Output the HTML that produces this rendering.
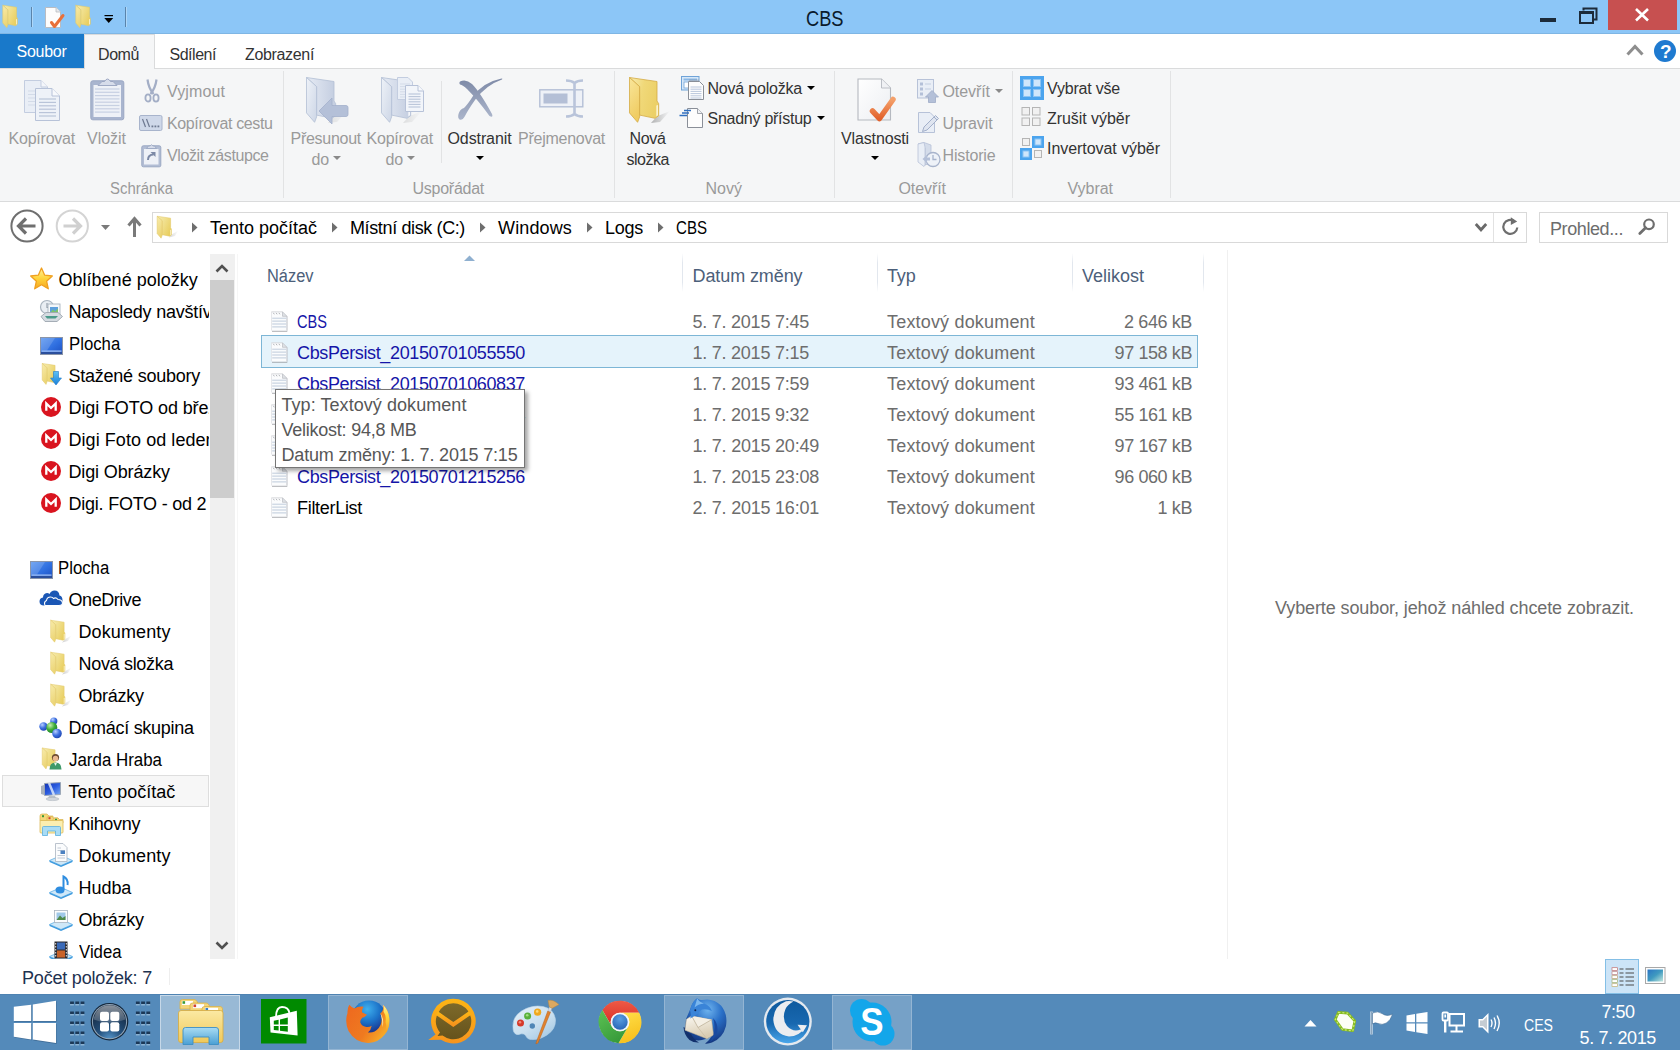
<!DOCTYPE html>
<html lang="cs"><head><meta charset="utf-8"><title>CBS</title>
<style>
html,body{margin:0;padding:0;width:1680px;height:1050px;overflow:hidden;background:#fff;font-family:"Liberation Sans",sans-serif;font-size:18px;color:#000}
.a{position:absolute}
.t{position:absolute;white-space:nowrap}
svg{overflow:visible}
</style></head><body>
<div class="a" style="left:0px;top:0px;width:1680px;height:34px;background:#8cc6f7;"></div>
<div class="a" style="left:0px;top:33px;width:1680px;height:1px;background:#7fb6e4;"></div>
<div class="t" style="left:806.0px;top:6px;font-size:22px;line-height:25px;color:#0a1a2c;transform:scaleX(0.83);transform-origin:0 0;">CBS</div>
<div class="a" style="left:1608px;top:0px;width:69px;height:30px;background:#c75050;"></div>
<div class="a" style="left:1540px;top:18px;width:16px;height:4px;background:#1c2b3a;"></div>
<svg class="a" style="left:1576px;top:5px;" width="24" height="20" viewBox="0 0 24 20"><path d="M7.5 5.5V3.5H20.5V14.5H18" fill="none" stroke="#1c2b3a" stroke-width="2"/><rect x="4" y="7" width="13" height="11" fill="none" stroke="#1c2b3a" stroke-width="2"/><rect x="3" y="6" width="15" height="3" fill="#1c2b3a"/></svg>
<svg class="a" style="left:1634px;top:7px;" width="16" height="16" viewBox="0 0 16 16"><path d="M2 2L14 13.5M14 2L2 13.5" stroke="#fff" stroke-width="2.6" fill="none"/></svg>
<div class="a" style="left:0px;top:34px;width:1680px;height:34px;background:#fff;"></div>
<div class="a" style="left:0px;top:68px;width:1680px;height:1px;background:#dadbdc;"></div>
<div class="a" style="left:0px;top:34px;width:84px;height:34px;background:#1979ca;"></div>
<div class="t" style="left:16.5px;top:43px;font-size:16px;line-height:17px;color:#fff;letter-spacing:-0.266px;">Soubor</div>
<div class="a" style="left:84px;top:34px;width:71px;height:35px;background:#f5f6f7;border:1px solid #dadbdc;border-bottom:none;box-sizing:border-box;"></div>
<div class="t" style="left:98.0px;top:46px;font-size:16px;line-height:17px;color:#333333;letter-spacing:-0.420px;">Domů</div>
<div class="t" style="left:169.5px;top:46px;font-size:16px;line-height:17px;color:#333333;letter-spacing:-0.473px;">Sdílení</div>
<div class="t" style="left:245.0px;top:46px;font-size:16px;line-height:17px;color:#333333;letter-spacing:-0.338px;">Zobrazení</div>
<svg class="a" style="left:1626px;top:43px;" width="18" height="14" viewBox="0 0 18 14"><path d="M1.5 11.5L9 3.5L16.5 11.5" fill="none" stroke="#8e8e8e" stroke-width="3"/></svg>
<div class="a" style="left:1654px;top:40px;width:22px;height:22px;background:#1e7ad0;border-radius:50%;"></div>
<div class="t" style="left:1660.0px;top:41px;font-size:19px;line-height:21px;color:#fff;font-weight:bold;">?</div>
<div class="a" style="left:0px;top:69px;width:1680px;height:132px;background:#f5f6f7;"></div>
<div class="a" style="left:0px;top:201px;width:1680px;height:1px;background:#dadbdc;"></div>
<div class="a" style="left:283px;top:71px;width:1px;height:127px;background:#e2e3e4;"></div>
<div class="a" style="left:614px;top:71px;width:1px;height:127px;background:#e2e3e4;"></div>
<div class="a" style="left:834px;top:71px;width:1px;height:127px;background:#e2e3e4;"></div>
<div class="a" style="left:1012px;top:71px;width:1px;height:127px;background:#e2e3e4;"></div>
<div class="a" style="left:1170px;top:71px;width:1px;height:127px;background:#e2e3e4;"></div>
<div class="a" style="left:441px;top:81px;width:1px;height:82px;background:#e2e3e4;"></div>
<div class="t" style="left:8.5px;top:130px;font-size:16px;line-height:17px;color:#9a9a9a;letter-spacing:-0.220px;">Kopírovat</div>
<div class="t" style="left:87.0px;top:130px;font-size:16px;line-height:17px;color:#9a9a9a;letter-spacing:-0.021px;">Vložit</div>
<div class="t" style="left:167.0px;top:83px;font-size:16px;line-height:17px;color:#9a9a9a;letter-spacing:0.114px;">Vyjmout</div>
<div class="t" style="left:167.0px;top:115px;font-size:16px;line-height:17px;color:#9a9a9a;letter-spacing:-0.378px;">Kopírovat cestu</div>
<div class="t" style="left:167.0px;top:147px;font-size:16px;line-height:17px;color:#9a9a9a;letter-spacing:-0.407px;">Vložit zástupce</div>
<div class="t" style="left:109.5px;top:180px;font-size:16px;line-height:17px;color:#9a9a9a;transform:scaleX(0.9320);transform-origin:0 0;">Schránka</div>
<div class="t" style="left:290.5px;top:130px;font-size:16px;line-height:17px;color:#9a9a9a;letter-spacing:-0.271px;">Přesunout</div>
<div class="t" style="left:311.5px;top:151px;font-size:16px;line-height:17px;color:#9a9a9a;letter-spacing:-0.148px;">do</div>
<svg class="a" style="left:333px;top:156px;" width="8" height="4" viewBox="0 0 8 4"><path d="M0 0H8L4 4Z" fill="#8a8a8a"/></svg>
<div class="t" style="left:366.5px;top:130px;font-size:16px;line-height:17px;color:#9a9a9a;letter-spacing:-0.220px;">Kopírovat</div>
<div class="t" style="left:385.5px;top:151px;font-size:16px;line-height:17px;color:#9a9a9a;letter-spacing:-0.148px;">do</div>
<svg class="a" style="left:407px;top:156px;" width="8" height="4" viewBox="0 0 8 4"><path d="M0 0H8L4 4Z" fill="#8a8a8a"/></svg>
<div class="t" style="left:447.5px;top:130px;font-size:16px;line-height:17px;color:#333333;letter-spacing:-0.102px;">Odstranit</div>
<svg class="a" style="left:475.5px;top:156px;" width="8" height="4" viewBox="0 0 8 4"><path d="M0 0H8L4 4Z" fill="#000"/></svg>
<div class="t" style="left:518.0px;top:130px;font-size:16px;line-height:17px;color:#9a9a9a;letter-spacing:-0.256px;">Přejmenovat</div>
<div class="t" style="left:412.5px;top:180px;font-size:16px;line-height:17px;color:#9a9a9a;letter-spacing:-0.258px;">Uspořádat</div>
<div class="t" style="left:629.5px;top:130px;font-size:16px;line-height:17px;color:#333333;letter-spacing:-0.338px;">Nová</div>
<div class="t" style="left:626.5px;top:151px;font-size:16px;line-height:17px;color:#333333;letter-spacing:-0.475px;">složka</div>
<div class="t" style="left:707.5px;top:80px;font-size:16px;line-height:17px;color:#333333;letter-spacing:-0.204px;">Nová položka</div>
<svg class="a" style="left:806.5px;top:86px;" width="8" height="4" viewBox="0 0 8 4"><path d="M0 0H8L4 4Z" fill="#000"/></svg>
<div class="t" style="left:707.5px;top:110px;font-size:16px;line-height:17px;color:#333333;letter-spacing:-0.259px;">Snadný přístup</div>
<svg class="a" style="left:816.5px;top:116px;" width="8" height="4" viewBox="0 0 8 4"><path d="M0 0H8L4 4Z" fill="#000"/></svg>
<div class="t" style="left:705.5px;top:180px;font-size:16px;line-height:17px;color:#9a9a9a;letter-spacing:0.012px;">Nový</div>
<div class="t" style="left:841.0px;top:130px;font-size:16px;line-height:17px;color:#333333;letter-spacing:-0.137px;">Vlastnosti</div>
<svg class="a" style="left:870.5px;top:156px;" width="8" height="4" viewBox="0 0 8 4"><path d="M0 0H8L4 4Z" fill="#000"/></svg>
<div class="t" style="left:942.5px;top:83px;font-size:16px;line-height:17px;color:#9a9a9a;letter-spacing:-0.073px;">Otevřít</div>
<svg class="a" style="left:994.5px;top:89px;" width="8" height="4" viewBox="0 0 8 4"><path d="M0 0H8L4 4Z" fill="#8a8a8a"/></svg>
<div class="t" style="left:942.5px;top:115px;font-size:16px;line-height:17px;color:#9a9a9a;letter-spacing:-0.097px;">Upravit</div>
<div class="t" style="left:942.5px;top:147px;font-size:16px;line-height:17px;color:#9a9a9a;letter-spacing:-0.154px;">Historie</div>
<div class="t" style="left:898.5px;top:180px;font-size:16px;line-height:17px;color:#9a9a9a;letter-spacing:-0.073px;">Otevřít</div>
<div class="t" style="left:1047.0px;top:80px;font-size:16px;line-height:17px;color:#333333;letter-spacing:-0.199px;">Vybrat vše</div>
<div class="t" style="left:1047.0px;top:110px;font-size:16px;line-height:17px;color:#333333;letter-spacing:-0.048px;">Zrušit výběr</div>
<div class="t" style="left:1047.0px;top:140px;font-size:16px;line-height:17px;color:#333333;letter-spacing:-0.052px;">Invertovat výběr</div>
<div class="t" style="left:1067.5px;top:180px;font-size:16px;line-height:17px;color:#9a9a9a;letter-spacing:-0.025px;">Vybrat</div>
<div class="a" style="left:0px;top:202px;width:1680px;height:48px;background:#fff;"></div>
<div class="a" style="left:152px;top:212px;width:1375px;height:31px;background:#fff;border:1px solid #d9d9d9;box-sizing:border-box;"></div>
<div class="a" style="left:1493px;top:213px;width:1px;height:29px;background:#e2e2e2;"></div>
<div class="a" style="left:1539px;top:212px;width:129px;height:31px;background:#fff;border:1px solid #d9d9d9;box-sizing:border-box;"></div>
<div class="t" style="left:210.0px;top:218px;font-size:18px;line-height:20px;color:#000;letter-spacing:-0.006px;">Tento počítač</div>
<div class="t" style="left:350.0px;top:218px;font-size:18px;line-height:20px;color:#000;letter-spacing:-0.376px;">Místní disk (C:)</div>
<div class="t" style="left:498.0px;top:218px;font-size:18px;line-height:20px;color:#000;letter-spacing:0.140px;">Windows</div>
<div class="t" style="left:605.0px;top:218px;font-size:18px;line-height:20px;color:#000;letter-spacing:-0.258px;">Logs</div>
<div class="t" style="left:676.0px;top:218px;font-size:18px;line-height:20px;color:#000;transform:scaleX(0.8376);transform-origin:0 0;">CBS</div>
<svg class="a" style="left:191px;top:222px;" width="7" height="11" viewBox="0 0 7 11"><path d="M1 0.500L6.500 5.500L1 10.500Z" fill="#6e6e6e"/></svg>
<svg class="a" style="left:331px;top:222px;" width="7" height="11" viewBox="0 0 7 11"><path d="M1 0.500L6.500 5.500L1 10.500Z" fill="#6e6e6e"/></svg>
<svg class="a" style="left:479px;top:222px;" width="7" height="11" viewBox="0 0 7 11"><path d="M1 0.500L6.500 5.500L1 10.500Z" fill="#6e6e6e"/></svg>
<svg class="a" style="left:586px;top:222px;" width="7" height="11" viewBox="0 0 7 11"><path d="M1 0.500L6.500 5.500L1 10.500Z" fill="#6e6e6e"/></svg>
<svg class="a" style="left:657px;top:222px;" width="7" height="11" viewBox="0 0 7 11"><path d="M1 0.500L6.500 5.500L1 10.500Z" fill="#6e6e6e"/></svg>
<div class="t" style="left:1550.0px;top:219px;font-size:18px;line-height:20px;color:#6d6d6d;letter-spacing:-0.405px;">Prohled...</div>
<div class="a" style="left:210px;top:254px;width:25px;height:705px;background:#f0f0f0;"></div>
<div class="a" style="left:237px;top:254px;width:1px;height:705px;background:#f6f6f6;"></div>
<div class="a" style="left:210px;top:280px;width:24px;height:218px;background:#cdcdcd;"></div>
<svg class="a" style="left:215px;top:264px;" width="14" height="9" viewBox="0 0 14 9"><path d="M1.5 7.5L7 2L12.5 7.5" fill="none" stroke="#505050" stroke-width="2.6"/></svg>
<svg class="a" style="left:215px;top:941px;" width="14" height="9" viewBox="0 0 14 9"><path d="M1.5 1.5L7 7L12.5 1.5" fill="none" stroke="#505050" stroke-width="2.6"/></svg>
<div class="a" style="left:2px;top:775px;width:207px;height:32px;background:#f7f7f7;border:1px solid #dedede;box-sizing:border-box;"></div>
<div class="a" style="left:0;top:250px;width:209px;height:709px;overflow:hidden">
<div class="t" style="left:58.5px;top:20px;font-size:18px;line-height:20px;color:#000;letter-spacing:0.013px;">Oblíbené položky</div>
<div class="t" style="left:68.5px;top:52px;font-size:18px;line-height:20px;color:#000;letter-spacing:-0.241px;">Naposledy navštívené</div>
<div class="t" style="left:68.5px;top:84px;font-size:18px;line-height:20px;color:#000;transform:scaleX(0.9303);transform-origin:0 0;">Plocha</div>
<div class="t" style="left:68.5px;top:116px;font-size:18px;line-height:20px;color:#000;letter-spacing:-0.239px;">Stažené soubory</div>
<div class="t" style="left:68.5px;top:148px;font-size:18px;line-height:20px;color:#000;letter-spacing:-0.118px;">Digi FOTO od března</div>
<div class="t" style="left:68.5px;top:180px;font-size:18px;line-height:20px;color:#000;letter-spacing:0.061px;">Digi Foto od leden</div>
<div class="t" style="left:68.5px;top:212px;font-size:18px;line-height:20px;color:#000;letter-spacing:-0.135px;">Digi Obrázky</div>
<div class="t" style="left:68.5px;top:244px;font-size:18px;line-height:20px;color:#000;letter-spacing:-0.230px;">Digi. FOTO - od 2</div>
<div class="t" style="left:58.0px;top:308px;font-size:18px;line-height:20px;color:#000;transform:scaleX(0.9303);transform-origin:0 0;">Plocha</div>
<div class="t" style="left:68.5px;top:340px;font-size:18px;line-height:20px;color:#000;letter-spacing:-0.441px;">OneDrive</div>
<div class="t" style="left:78.5px;top:372px;font-size:18px;line-height:20px;color:#000;letter-spacing:0.107px;">Dokumenty</div>
<div class="t" style="left:78.5px;top:404px;font-size:18px;line-height:20px;color:#000;letter-spacing:-0.313px;">Nová složka</div>
<div class="t" style="left:78.5px;top:436px;font-size:18px;line-height:20px;color:#000;letter-spacing:-0.245px;">Obrázky</div>
<div class="t" style="left:68.5px;top:468px;font-size:18px;line-height:20px;color:#000;letter-spacing:-0.269px;">Domácí skupina</div>
<div class="t" style="left:68.5px;top:500px;font-size:18px;line-height:20px;color:#000;transform:scaleX(0.9389);transform-origin:0 0;">Jarda Hraba</div>
<div class="t" style="left:68.5px;top:532px;font-size:18px;line-height:20px;color:#000;letter-spacing:-0.029px;">Tento počítač</div>
<div class="t" style="left:68.5px;top:564px;font-size:18px;line-height:20px;color:#000;letter-spacing:-0.294px;">Knihovny</div>
<div class="t" style="left:78.5px;top:596px;font-size:18px;line-height:20px;color:#000;letter-spacing:0.107px;">Dokumenty</div>
<div class="t" style="left:78.5px;top:628px;font-size:18px;line-height:20px;color:#000;letter-spacing:-0.048px;">Hudba</div>
<div class="t" style="left:78.5px;top:660px;font-size:18px;line-height:20px;color:#000;letter-spacing:-0.245px;">Obrázky</div>
<div class="t" style="left:78.5px;top:692px;font-size:18px;line-height:20px;color:#000;transform:scaleX(0.9319);transform-origin:0 0;">Videa</div>
</div>
<div class="t" style="left:267.0px;top:266px;font-size:18px;line-height:20px;color:#4c607a;transform:scaleX(0.9114);transform-origin:0 0;">Název</div>
<div class="t" style="left:692.5px;top:266px;font-size:18px;line-height:20px;color:#4c607a;letter-spacing:-0.094px;">Datum změny</div>
<div class="t" style="left:887.0px;top:266px;font-size:18px;line-height:20px;color:#4c607a;letter-spacing:-0.171px;">Typ</div>
<div class="t" style="left:1082.0px;top:266px;font-size:18px;line-height:20px;color:#4c607a;letter-spacing:-0.004px;">Velikost</div>
<div class="a" style="left:682px;top:253px;width:1px;height:39px;background:linear-gradient(to bottom,rgba(226,231,238,0),#e2e7ee 25%,#e2e7ee 75%,rgba(226,231,238,0));"></div>
<div class="a" style="left:877px;top:253px;width:1px;height:39px;background:linear-gradient(to bottom,rgba(226,231,238,0),#e2e7ee 25%,#e2e7ee 75%,rgba(226,231,238,0));"></div>
<div class="a" style="left:1072px;top:253px;width:1px;height:39px;background:linear-gradient(to bottom,rgba(226,231,238,0),#e2e7ee 25%,#e2e7ee 75%,rgba(226,231,238,0));"></div>
<div class="a" style="left:1203px;top:253px;width:1px;height:39px;background:linear-gradient(to bottom,rgba(226,231,238,0),#e2e7ee 25%,#e2e7ee 75%,rgba(226,231,238,0));"></div>
<svg class="a" style="left:464px;top:255px;" width="11" height="6" viewBox="0 0 11 6"><path d="M0 6L5.5 0.5L11 6Z" fill="#8fb0d0"/></svg>
<div class="a" style="left:1227px;top:250px;width:1px;height:709px;background:#f0f0f0;"></div>
<div class="a" style="left:261px;top:335px;width:937px;height:33px;background:#e5f3fb;border:1px solid #7db6d6;box-sizing:border-box;"></div>
<div class="t" style="left:297.0px;top:312px;font-size:18px;line-height:20px;color:#1515a8;transform:scaleX(0.8106);transform-origin:0 0;">CBS</div>
<div class="t" style="left:692.5px;top:312px;font-size:18px;line-height:20px;color:#6d6d6d;letter-spacing:-0.241px;">5. 7. 2015 7:45</div>
<div class="t" style="left:887.0px;top:312px;font-size:18px;line-height:20px;color:#6d6d6d;letter-spacing:0.183px;">Textový dokument</div>
<div class="t" style="left:1124.1px;top:312px;font-size:18px;line-height:20px;color:#6d6d6d;letter-spacing:-0.400px;">2 646 kB</div>
<div class="t" style="left:297.0px;top:343px;font-size:18px;line-height:20px;color:#1515a8;letter-spacing:-0.367px;">CbsPersist_20150701055550</div>
<div class="t" style="left:692.5px;top:343px;font-size:18px;line-height:20px;color:#6d6d6d;letter-spacing:-0.241px;">1. 7. 2015 7:15</div>
<div class="t" style="left:887.0px;top:343px;font-size:18px;line-height:20px;color:#6d6d6d;letter-spacing:0.183px;">Textový dokument</div>
<div class="t" style="left:1114.6px;top:343px;font-size:18px;line-height:20px;color:#6d6d6d;letter-spacing:-0.405px;">97 158 kB</div>
<div class="t" style="left:297.0px;top:374px;font-size:18px;line-height:20px;color:#1515a8;letter-spacing:-0.367px;">CbsPersist_20150701060837</div>
<div class="t" style="left:692.5px;top:374px;font-size:18px;line-height:20px;color:#6d6d6d;letter-spacing:-0.241px;">1. 7. 2015 7:59</div>
<div class="t" style="left:887.0px;top:374px;font-size:18px;line-height:20px;color:#6d6d6d;letter-spacing:0.183px;">Textový dokument</div>
<div class="t" style="left:1114.6px;top:374px;font-size:18px;line-height:20px;color:#6d6d6d;letter-spacing:-0.405px;">93 461 kB</div>
<div class="t" style="left:297.0px;top:405px;font-size:18px;line-height:20px;color:#1515a8;letter-spacing:-0.367px;">CbsPersist_20150701073204</div>
<div class="t" style="left:692.5px;top:405px;font-size:18px;line-height:20px;color:#6d6d6d;letter-spacing:-0.241px;">1. 7. 2015 9:32</div>
<div class="t" style="left:887.0px;top:405px;font-size:18px;line-height:20px;color:#6d6d6d;letter-spacing:0.183px;">Textový dokument</div>
<div class="t" style="left:1114.6px;top:405px;font-size:18px;line-height:20px;color:#6d6d6d;letter-spacing:-0.405px;">55 161 kB</div>
<div class="t" style="left:297.0px;top:436px;font-size:18px;line-height:20px;color:#1515a8;letter-spacing:-0.314px;">CbsPersist_20150701184942</div>
<div class="t" style="left:692.5px;top:436px;font-size:18px;line-height:20px;color:#6d6d6d;letter-spacing:-0.226px;">1. 7. 2015 20:49</div>
<div class="t" style="left:887.0px;top:436px;font-size:18px;line-height:20px;color:#6d6d6d;letter-spacing:0.183px;">Textový dokument</div>
<div class="t" style="left:1114.6px;top:436px;font-size:18px;line-height:20px;color:#6d6d6d;letter-spacing:-0.405px;">97 167 kB</div>
<div class="t" style="left:297.0px;top:467px;font-size:18px;line-height:20px;color:#1515a8;letter-spacing:-0.367px;">CbsPersist_20150701215256</div>
<div class="t" style="left:692.5px;top:467px;font-size:18px;line-height:20px;color:#6d6d6d;letter-spacing:-0.226px;">1. 7. 2015 23:08</div>
<div class="t" style="left:887.0px;top:467px;font-size:18px;line-height:20px;color:#6d6d6d;letter-spacing:0.183px;">Textový dokument</div>
<div class="t" style="left:1114.6px;top:467px;font-size:18px;line-height:20px;color:#6d6d6d;letter-spacing:-0.405px;">96 060 kB</div>
<div class="t" style="left:297.0px;top:498px;font-size:18px;line-height:20px;color:#000;letter-spacing:-0.301px;">FilterList</div>
<div class="t" style="left:692.5px;top:498px;font-size:18px;line-height:20px;color:#6d6d6d;letter-spacing:-0.226px;">2. 7. 2015 16:01</div>
<div class="t" style="left:887.0px;top:498px;font-size:18px;line-height:20px;color:#6d6d6d;letter-spacing:0.183px;">Textový dokument</div>
<div class="t" style="left:1157.6px;top:498px;font-size:18px;line-height:20px;color:#6d6d6d;letter-spacing:-0.405px;">1 kB</div>
<div class="t" style="left:1275.0px;top:598px;font-size:18px;line-height:20px;color:#6d6d6d;letter-spacing:-0.101px;">Vyberte soubor, jehož náhled chcete zobrazit.</div>
<div class="t" style="left:22.0px;top:968px;font-size:18px;line-height:20px;color:#1e3250;letter-spacing:-0.193px;">Počet položek: 7</div>
<div class="a" style="left:169px;top:968px;width:1px;height:17px;background:#eeeeee;"></div>
<div class="a" style="left:1605px;top:959px;width:34px;height:35px;background:#cce4f7;border:1px solid #84bfe6;box-sizing:border-box;"></div>
<div class="a" style="left:0px;top:994px;width:1680px;height:56px;background:#548aba;"></div>
<div class="a" style="left:0px;top:994px;width:1680px;height:1px;background:#4f83b2;"></div>
<div class="a" style="left:160px;top:995px;width:80px;height:55px;background:rgba(255,255,255,0.40);box-shadow:inset 0 0 0 1px rgba(255,255,255,0.45);"></div>
<div class="a" style="left:328px;top:995px;width:80px;height:55px;background:rgba(255,255,255,0.20);box-shadow:inset 0 0 0 1px rgba(255,255,255,0.22);"></div>
<div class="a" style="left:664px;top:995px;width:80px;height:55px;background:rgba(255,255,255,0.20);box-shadow:inset 0 0 0 1px rgba(255,255,255,0.22);"></div>
<div class="a" style="left:832px;top:995px;width:80px;height:55px;background:rgba(255,255,255,0.20);box-shadow:inset 0 0 0 1px rgba(255,255,255,0.22);"></div>
<div class="t" style="left:1601.5px;top:1002px;font-size:18px;line-height:20px;color:#fff;letter-spacing:-0.509px;">7:50</div>
<div class="t" style="left:1579.5px;top:1028px;font-size:18px;line-height:20px;color:#fff;letter-spacing:-0.357px;">5. 7. 2015</div>
<div class="t" style="left:1523.5px;top:1017px;font-size:16px;line-height:17px;color:#fff;transform:scaleX(0.8815);transform-origin:0 0;">CES</div>
<svg class="a" style="left:0px;top:993px;" width="60" height="57" viewBox="0 0 60 57"><g fill="#1d3a5a" opacity="0.350" transform="translate(0.600 0.800)">
<path d="M13.800 13.800L31.200 11.700V27.900H13.800Z"/><path d="M32.800 11.400L56 7.700V27.900H32.800Z"/><path d="M13.800 30.100H31.200V46.400L13.800 43.700Z"/><path d="M32.800 30.100H56V50.100L32.800 46.600Z"/></g>
<g fill="#fff"><path d="M13.800 13.800L31.200 11.700V27.900H13.800Z"/><path d="M32.800 11.400L56 7.700V27.900H32.800Z"/>
<path d="M13.800 30.100H31.200V46.400L13.800 43.700Z"/><path d="M32.800 30.100H56V50.100L32.800 46.600Z"/></g></svg>
<svg class="a" style="left:0px;top:993px;" width="160" height="57" viewBox="0 0 160 57"><rect x="70.10000000000001" y="8.5" width="3.800" height="2.600" fill="#1b3857"/><rect x="70.10000000000001" y="11.1" width="3.800" height="1.300" fill="#a9c8e2" opacity="0.750"/><rect x="75.35000000000001" y="8.5" width="3.800" height="2.600" fill="#1b3857"/><rect x="75.35000000000001" y="11.1" width="3.800" height="1.300" fill="#a9c8e2" opacity="0.750"/><rect x="80.60000000000001" y="8.5" width="3.800" height="2.600" fill="#1b3857"/><rect x="80.60000000000001" y="11.1" width="3.800" height="1.300" fill="#a9c8e2" opacity="0.750"/><rect x="70.10000000000001" y="18.5" width="3.800" height="2.600" fill="#1b3857"/><rect x="70.10000000000001" y="21.1" width="3.800" height="1.300" fill="#a9c8e2" opacity="0.750"/><rect x="75.35000000000001" y="18.5" width="3.800" height="2.600" fill="#1b3857"/><rect x="75.35000000000001" y="21.1" width="3.800" height="1.300" fill="#a9c8e2" opacity="0.750"/><rect x="80.60000000000001" y="18.5" width="3.800" height="2.600" fill="#1b3857"/><rect x="80.60000000000001" y="21.1" width="3.800" height="1.300" fill="#a9c8e2" opacity="0.750"/><rect x="70.10000000000001" y="28.5" width="3.800" height="2.600" fill="#1b3857"/><rect x="70.10000000000001" y="31.1" width="3.800" height="1.300" fill="#a9c8e2" opacity="0.750"/><rect x="75.35000000000001" y="28.5" width="3.800" height="2.600" fill="#1b3857"/><rect x="75.35000000000001" y="31.1" width="3.800" height="1.300" fill="#a9c8e2" opacity="0.750"/><rect x="80.60000000000001" y="28.5" width="3.800" height="2.600" fill="#1b3857"/><rect x="80.60000000000001" y="31.1" width="3.800" height="1.300" fill="#a9c8e2" opacity="0.750"/><rect x="70.10000000000001" y="38.5" width="3.800" height="2.600" fill="#1b3857"/><rect x="70.10000000000001" y="41.1" width="3.800" height="1.300" fill="#a9c8e2" opacity="0.750"/><rect x="75.35000000000001" y="38.5" width="3.800" height="2.600" fill="#1b3857"/><rect x="75.35000000000001" y="41.1" width="3.800" height="1.300" fill="#a9c8e2" opacity="0.750"/><rect x="80.60000000000001" y="38.5" width="3.800" height="2.600" fill="#1b3857"/><rect x="80.60000000000001" y="41.1" width="3.800" height="1.300" fill="#a9c8e2" opacity="0.750"/><rect x="70.10000000000001" y="48.5" width="3.800" height="2.600" fill="#1b3857"/><rect x="70.10000000000001" y="51.1" width="3.800" height="1.300" fill="#a9c8e2" opacity="0.750"/><rect x="75.35000000000001" y="48.5" width="3.800" height="2.600" fill="#1b3857"/><rect x="75.35000000000001" y="51.1" width="3.800" height="1.300" fill="#a9c8e2" opacity="0.750"/><rect x="80.60000000000001" y="48.5" width="3.800" height="2.600" fill="#1b3857"/><rect x="80.60000000000001" y="51.1" width="3.800" height="1.300" fill="#a9c8e2" opacity="0.750"/><rect x="135.89999999999998" y="8.5" width="3.800" height="2.600" fill="#1b3857"/><rect x="135.89999999999998" y="11.1" width="3.800" height="1.300" fill="#a9c8e2" opacity="0.750"/><rect x="141.14999999999998" y="8.5" width="3.800" height="2.600" fill="#1b3857"/><rect x="141.14999999999998" y="11.1" width="3.800" height="1.300" fill="#a9c8e2" opacity="0.750"/><rect x="146.39999999999998" y="8.5" width="3.800" height="2.600" fill="#1b3857"/><rect x="146.39999999999998" y="11.1" width="3.800" height="1.300" fill="#a9c8e2" opacity="0.750"/><rect x="135.89999999999998" y="18.5" width="3.800" height="2.600" fill="#1b3857"/><rect x="135.89999999999998" y="21.1" width="3.800" height="1.300" fill="#a9c8e2" opacity="0.750"/><rect x="141.14999999999998" y="18.5" width="3.800" height="2.600" fill="#1b3857"/><rect x="141.14999999999998" y="21.1" width="3.800" height="1.300" fill="#a9c8e2" opacity="0.750"/><rect x="146.39999999999998" y="18.5" width="3.800" height="2.600" fill="#1b3857"/><rect x="146.39999999999998" y="21.1" width="3.800" height="1.300" fill="#a9c8e2" opacity="0.750"/><rect x="135.89999999999998" y="28.5" width="3.800" height="2.600" fill="#1b3857"/><rect x="135.89999999999998" y="31.1" width="3.800" height="1.300" fill="#a9c8e2" opacity="0.750"/><rect x="141.14999999999998" y="28.5" width="3.800" height="2.600" fill="#1b3857"/><rect x="141.14999999999998" y="31.1" width="3.800" height="1.300" fill="#a9c8e2" opacity="0.750"/><rect x="146.39999999999998" y="28.5" width="3.800" height="2.600" fill="#1b3857"/><rect x="146.39999999999998" y="31.1" width="3.800" height="1.300" fill="#a9c8e2" opacity="0.750"/><rect x="135.89999999999998" y="38.5" width="3.800" height="2.600" fill="#1b3857"/><rect x="135.89999999999998" y="41.1" width="3.800" height="1.300" fill="#a9c8e2" opacity="0.750"/><rect x="141.14999999999998" y="38.5" width="3.800" height="2.600" fill="#1b3857"/><rect x="141.14999999999998" y="41.1" width="3.800" height="1.300" fill="#a9c8e2" opacity="0.750"/><rect x="146.39999999999998" y="38.5" width="3.800" height="2.600" fill="#1b3857"/><rect x="146.39999999999998" y="41.1" width="3.800" height="1.300" fill="#a9c8e2" opacity="0.750"/><rect x="135.89999999999998" y="48.5" width="3.800" height="2.600" fill="#1b3857"/><rect x="135.89999999999998" y="51.1" width="3.800" height="1.300" fill="#a9c8e2" opacity="0.750"/><rect x="141.14999999999998" y="48.5" width="3.800" height="2.600" fill="#1b3857"/><rect x="141.14999999999998" y="51.1" width="3.800" height="1.300" fill="#a9c8e2" opacity="0.750"/><rect x="146.39999999999998" y="48.5" width="3.800" height="2.600" fill="#1b3857"/><rect x="146.39999999999998" y="51.1" width="3.800" height="1.300" fill="#a9c8e2" opacity="0.750"/></svg>
<svg class="a" style="left:90px;top:1002px;" width="40" height="40" viewBox="0 0 40 40"><defs><radialGradient id="orb" cx="0.500" cy="1.050" r="0.950"><stop offset="0" stop-color="#5a9bd0"/><stop offset="0.400" stop-color="#24507c"/><stop offset="1" stop-color="#16283e"/></radialGradient>
<linearGradient id="orbh" x1="0" y1="0" x2="0" y2="1"><stop offset="0" stop-color="#fff" stop-opacity="0.500"/><stop offset="1" stop-color="#fff" stop-opacity="0.150"/></linearGradient></defs>
<circle cx="19.500" cy="19.700" r="18.800" fill="#13263a"/><circle cx="19.500" cy="19.700" r="17.600" fill="#8fa3b6"/><circle cx="19.500" cy="19.700" r="16.600" fill="url(#orb)"/>
<path d="M3.600 17.500A16 16 0 0 1 35.400 17.500Q19.500 24 3.600 17.500Z" fill="url(#orbh)"/>
<g fill="#fff"><rect x="10" y="9.700" width="9" height="9.300" rx="2"/><rect x="20.300" y="9.700" width="9" height="9.300" rx="2"/><rect x="10" y="20.200" width="9" height="9.300" rx="2"/><rect x="20.300" y="20.200" width="9" height="9.300" rx="2"/></g></svg>
<svg class="a" style="left:176px;top:997px;" width="50" height="50" viewBox="0 0 50 50"><defs><linearGradient id="exf" x1="0" y1="0" x2="0" y2="1"><stop offset="0" stop-color="#fbe9a3"/><stop offset="1" stop-color="#f0c95a"/></linearGradient>
<linearGradient id="exb" x1="0" y1="0" x2="0" y2="1"><stop offset="0" stop-color="#a9dcf3"/><stop offset="1" stop-color="#4a9fd4"/></linearGradient></defs>
<path d="M4 5Q4 2.5 6.5 2.5H18Q20 2.5 21 4.5L22 6.5H15V12H4Z" fill="#f4d57a" stroke="#d9b24c" stroke-width="0.8"/>
<rect x="6" y="4" width="11" height="4" fill="#fff"/><rect x="6.5" y="4.2" width="2.6" height="2.6" fill="#3a9a3a"/>
<path d="M14 8.5Q14 6 16.5 6H30Q32 6 33 8L34 10H27V14H14Z" fill="#f4d57a" stroke="#d9b24c" stroke-width="0.8"/>
<rect x="17" y="7.2" width="11" height="4" fill="#fff"/><rect x="17.5" y="7.5" width="2.6" height="2.6" fill="#d04030"/>
<path d="M26 12Q26 9.5 28.5 9.5H44Q46.5 9.5 46.5 12V16H26Z" fill="#f4d57a" stroke="#d9b24c" stroke-width="0.8"/>
<rect x="29" y="10.8" width="13" height="4" fill="#fff"/><rect x="29.5" y="11" width="2.6" height="2.6" fill="#3a80c8"/>
<rect x="2.5" y="13.5" width="44.5" height="32" rx="2.5" fill="url(#exf)" stroke="#d6ae48" stroke-width="0.9"/>
<path d="M7 47.5V33Q7 30.5 9.5 30.5H40Q42.500 30.5 42.5 33V47.5H33V40H17V47.5Z" fill="url(#exb)" stroke="#3d8ec4" stroke-width="0.9"/></svg>
<svg class="a" style="left:261px;top:999px;" width="46" height="45" viewBox="0 0 46 45"><rect width="45.500" height="44.500" fill="#008a00"/>
<path d="M15 17.500Q15.300 8 21 8Q27.500 8 28.400 14" fill="none" stroke="#fff" stroke-width="1.800"/>
<path d="M8.800 18.200L35.800 11.700L36.600 36.500L9.500 33.400Z" fill="#fff"/>
<g fill="#008a00"><path d="M12.800 21.800L17.600 20.700V25.600H12.800Z"/><path d="M19 20.400L26.800 18.600V25.600H19Z"/><path d="M12.800 27H17.600V31.600L12.800 31Z"/><path d="M19 27H26.800V32.800L19 31.800Z"/></g></svg>
<svg class="a" style="left:346px;top:999.5px;" width="44" height="44" viewBox="0 0 44 44"><defs><radialGradient id="ffg" cx="0.450" cy="0.250" r="0.800"><stop offset="0" stop-color="#3fb0ee"/><stop offset="0.450" stop-color="#1c72c8"/><stop offset="0.800" stop-color="#1a3a94"/><stop offset="1" stop-color="#1a2a70"/></radialGradient>
<linearGradient id="ffo" x1="0" y1="0.200" x2="1" y2="0.800"><stop offset="0" stop-color="#ee6a1f"/><stop offset="0.550" stop-color="#ef7a20"/><stop offset="0.800" stop-color="#f59a24"/><stop offset="1" stop-color="#f8b82c"/></linearGradient>
<linearGradient id="ffy" x1="0" y1="0" x2="0" y2="1"><stop offset="0" stop-color="#fff0a0"/><stop offset="0.400" stop-color="#ffd93a"/><stop offset="1" stop-color="#f59a24"/></linearGradient></defs>
<circle cx="23" cy="18" r="17.500" fill="url(#ffg)"/>
<path d="M3.300 4.800Q5.500 7.500 8.500 8.500Q12 6 17.600 6.700Q15.500 9.500 16.200 12.400L21 14.800Q18.500 17.500 16.500 17.500Q14 20 14.300 22.500Q16 26.500 19.500 26.700Q23 27.500 25.700 25.700Q25 30 21.900 32.400Q25.500 33 28.600 31.400Q34 28 35.200 22.900Q36.500 17 34.300 13.300Q38 11 37.100 4.800Q43 11 43.300 19Q43.800 28 39 34.300Q32 43.200 21.900 42.900Q9 42.500 2.500 31Q-1.500 22 1.500 13Q1.200 8.500 3.300 4.800Z" fill="url(#ffo)"/>
<path d="M37.100 4.800Q43 11 43.300 19Q43.800 27 39.500 33.500Q41 27 39.500 22Q40.500 16 37.500 11.500Q38.200 8.500 37.100 4.800Z" fill="url(#ffy)"/>
<path d="M34.300 13.300Q38.500 19 36.500 27.500Q36.800 19.500 34.300 13.300Z" fill="#fff6c0"/></svg>
<svg class="a" style="left:428px;top:998px;" width="50" height="50" viewBox="0 0 50 50"><defs><linearGradient id="emo" x1="0" y1="0" x2="0" y2="1"><stop offset="0" stop-color="#fdb515"/><stop offset="1" stop-color="#f7941d"/></linearGradient>
<linearGradient id="emd" x1="0" y1="0" x2="0" y2="1"><stop offset="0" stop-color="#7d692a"/><stop offset="1" stop-color="#66531c"/></linearGradient></defs>
<path d="M25.300 0.700A22.400 22.400 0 1 1 13 41.800L0.300 42L7.500 36.500A22.400 22.400 0 0 1 25.300 0.700Z" fill="url(#emo)"/>
<path d="M25.300 5.200A18 18 0 1 1 14.500 37.600L9.500 38L12 34.500A18 18 0 0 1 25.300 5.200Z" fill="url(#emd)"/>
<path d="M8.700 15L25.300 26.500L42 15" fill="none" stroke="url(#emo)" stroke-width="4"/></svg>
<svg class="a" style="left:510px;top:998px;" width="50" height="50" viewBox="0 0 50 50"><defs><linearGradient id="pal" x1="0" y1="0" x2="0.800" y2="1"><stop offset="0" stop-color="#e6f1f9"/><stop offset="0.600" stop-color="#c9dfef"/><stop offset="1" stop-color="#a5c9e4"/></linearGradient></defs>
<path d="M3 29.500Q2 19 11.500 13Q22 6.500 33 8.500Q44 11 45.500 21.500Q46 31 37 37Q30 41.500 24.500 41.500Q18 42 16.500 39Q15.500 36.500 13.500 36Q11 35.500 9 36.500Q5.500 37.500 3.800 34Q3 32 3 29.500Z" fill="url(#pal)" stroke="#b5d2e8" stroke-width="0.600"/>
<circle cx="22.300" cy="28" r="2.700" fill="#4f86b6"/>
<circle cx="10.500" cy="25" r="3.500" fill="#d63a2a"/><circle cx="10" cy="24.200" r="1.300" fill="#ee8a7a"/>
<circle cx="17.600" cy="18" r="3.500" fill="#58b03a"/><circle cx="17.200" cy="17.200" r="1.300" fill="#a0dc80"/>
<circle cx="27.600" cy="14.200" r="3.600" fill="#f0a81e"/><circle cx="27.200" cy="13.400" r="1.300" fill="#fcd878"/>
<path d="M37.800 13L40.500 14.200L28.200 44.500Q27 46.500 25.800 45.500Z" fill="#e0822e" stroke="#b8601a" stroke-width="0.500"/>
<path d="M38 12.500L39.500 8.800L42 10L40.600 13.800Z" fill="#d8dde2" stroke="#9aa4ae" stroke-width="0.400"/>
<path d="M39.300 9L38 2.500Q43 1 49 6.500L42.200 10.300Z" fill="#dba860" stroke="#b88840" stroke-width="0.500"/></svg>
<svg class="a" style="left:598px;top:999.5px;" width="44" height="44" viewBox="0 0 44 44"><defs><linearGradient id="chr" x1="0" y1="0" x2="0" y2="1"><stop offset="0" stop-color="#ee5a46"/><stop offset="1" stop-color="#d82a22"/></linearGradient>
<linearGradient id="chy" x1="0" y1="0" x2="0.300" y2="1"><stop offset="0" stop-color="#ffe04a"/><stop offset="1" stop-color="#f7c01e"/></linearGradient>
<linearGradient id="chg" x1="0" y1="0" x2="0.600" y2="1"><stop offset="0" stop-color="#5cc254"/><stop offset="1" stop-color="#379a3a"/></linearGradient>
<radialGradient id="chb" cx="0.500" cy="0.300" r="0.700"><stop offset="0" stop-color="#5a9ee0"/><stop offset="1" stop-color="#2a66b8"/></radialGradient></defs>
<circle cx="22" cy="22" r="21" fill="#fff"/>
<path d="M13.95 26.65L4.36 10.05A21.3 21.3 0 0 1 41.16 12.70L22.00 12.70A9.3 9.3 0 0 0 13.95 26.65Z" fill="url(#chr)"/><path d="M22.00 12.70L41.16 12.70A21.3 21.3 0 0 1 20.47 43.25L30.05 26.65A9.3 9.3 0 0 0 22.00 12.70Z" fill="url(#chy)"/><path d="M30.05 26.65L20.47 43.25A21.3 21.3 0 0 1 4.36 10.05L13.95 26.65A9.3 9.3 0 0 0 30.05 26.65Z" fill="url(#chg)"/>
<circle cx="22" cy="22" r="9.300" fill="#f4f6f8"/><circle cx="22" cy="22" r="7.700" fill="url(#chb)"/></svg>
<svg class="a" style="left:680px;top:997px;" width="48" height="49" viewBox="0 0 48 49"><defs><radialGradient id="tbg" cx="0.550" cy="0.250" r="0.850"><stop offset="0" stop-color="#6fb4ee"/><stop offset="0.400" stop-color="#2a70c8"/><stop offset="0.800" stop-color="#173f8c"/><stop offset="1" stop-color="#0f2860"/></radialGradient>
<linearGradient id="tbe" x1="0" y1="0" x2="0.300" y2="1"><stop offset="0" stop-color="#fbf9f3"/><stop offset="1" stop-color="#d9ccb2"/></linearGradient></defs>
<path d="M17.300 1.300Q19 3.500 22 3Q33 0.500 41 8.500Q48 17 46 29Q43 41 32 45.500Q28 47 25 46.500Q30 43 32 38Q24 45 14 43Q8 41 5 34L6 22Q10 13 11 10Q13 4 17.300 1.300Z" fill="url(#tbg)"/>
<path d="M3.500 30Q4 38 9.500 43Q14 46 19 45.500Q13 42 11 37Q7 36 5.500 31Z" fill="#12306c"/>
<path d="M6.400 22.200L11.600 18.900L31.600 22.700L33.500 38L26.900 41.800L5 33.200Z" fill="url(#tbe)" stroke="#b8ab90" stroke-width="0.500"/>
<path d="M11.600 18.900L18 30.500L31.600 22.700" fill="#f4efe4" stroke="#b8ab90" stroke-width="0.700"/><path d="M18 30.500L26.900 41.800" stroke="#c8bba0" stroke-width="0.600"/>
<path d="M11 10Q12.500 5 17.300 1.300Q19 5 24 6.500Q30 8.500 32 14Q27 11.500 22 12.500Q19 14 17.500 17Q14 19.500 10.200 21.500Q11.500 17 10 13.500Z" fill="#3a84d8"/>
<path d="M17.300 1.300Q19 5 24 6.500Q18 7 14.500 10.500Z" fill="#8cc4f4" opacity="0.800"/>
<circle cx="15.300" cy="13.200" r="1" fill="#0f2450"/>
<path d="M33.500 38Q36 30 33 21Q38 26 37.500 34Q36 41 30 45Q32 42 33.500 38Z" fill="#1a4aa0"/></svg>
<svg class="a" style="left:763px;top:997px;" width="50" height="50" viewBox="0 0 50 50"><defs><linearGradient id="glg" x1="0" y1="0" x2="0" y2="1"><stop offset="0" stop-color="#0f5a9e"/><stop offset="0.550" stop-color="#1868b0"/><stop offset="1" stop-color="#4aa6ea"/></linearGradient></defs>
<circle cx="24.800" cy="24.600" r="24" fill="#e4e9ef"/><circle cx="24.800" cy="24.600" r="21.600" fill="url(#glg)"/>
<path d="M23 4.200Q10.500 9 10.300 23Q11.500 37.500 26 39.500Q36 39.500 42.500 30.500L37.500 32.500Q30 35.500 24 29Q18.500 21.500 22.500 12Q25 7 30.500 4.500Q26.500 3.500 23 4.200Z" fill="#ecedf0"/>
<path d="M34.500 27.800L44 28.200L39.800 35.200Z" fill="#ecedf0"/></svg>
<svg class="a" style="left:848px;top:998px;" width="48" height="48" viewBox="0 0 48 48"><circle cx="24" cy="24" r="19.500" fill="#13a6ea"/><circle cx="13.500" cy="12.500" r="11.500" fill="#13a6ea"/><circle cx="35" cy="36" r="11.500" fill="#13a6ea"/>
<text x="24" y="37.500" font-family="Liberation Sans, sans-serif" font-weight="bold" font-size="38" fill="#fff" text-anchor="middle" transform="translate(24 0) scale(0.920 1) translate(-24 0)">S</text></svg>
<svg class="a" style="left:1304px;top:1019px;" width="14" height="8" viewBox="0 0 14 8"><path d="M0.500 7.500L6.500 1L12.500 7.500Z" fill="#fff"/></svg>
<svg class="a" style="left:1333px;top:1010px;" width="24" height="24" viewBox="0 0 24 24"><path d="M5.400 2.400L14.600 3.100L21.800 10.900L19.800 20.800L9.400 19.500L2.200 9.600Z" fill="#fdfef6" stroke="#86bb1e" stroke-width="2.600" stroke-linejoin="round"/>
<path d="M5.400 2.400L14.600 3.100L21.800 10.900L19.800 20.800L9.400 19.500L2.200 9.600Z" fill="none" stroke="#c9e67a" stroke-width="1.200" stroke-linejoin="round" stroke-dasharray="2 2"/></svg>
<svg class="a" style="left:1369px;top:1010px;" width="26" height="26" viewBox="0 0 26 26"><path d="M2.500 1.500V24.500" stroke="#fff" stroke-width="2"/><path d="M2.500 1.500V24.500" stroke="#3d6a94" stroke-width="0.6"/>
<path d="M3.500 3Q9 0.500 13 3.500Q18 7 23.500 4Q22 10 17.500 13Q13 15.500 9 13.500Q6 12 3.500 14Z" fill="#fff" stroke="#3d6a94" stroke-width="0.600"/></svg>
<svg class="a" style="left:1406px;top:1012px;" width="22" height="22" viewBox="0 0 22 22"><g fill="#fff"><path d="M0.500 3.500L9 2V10.300H0.500Z"/><path d="M10.300 1.800L21.500 0V10.300H10.300Z"/><path d="M0.500 11.600H9V20L0.500 18.500Z"/><path d="M10.300 11.600H21.500V22L10.300 20.200Z"/></g></svg>
<svg class="a" style="left:1441px;top:1011px;" width="25" height="23" viewBox="0 0 25 23"><rect x="8.500" y="3" width="14.500" height="11.500" fill="none" stroke="#fff" stroke-width="2"/><path d="M15.500 15V19.500M9.500 20.500H22" stroke="#fff" stroke-width="2"/>
<rect x="1.500" y="1.500" width="5.500" height="8" rx="1" fill="#548aba" stroke="#fff" stroke-width="1.800"/><path d="M4.200 9.500V21.500" stroke="#fff" stroke-width="2.400"/><rect x="3.400" y="3.500" width="1.700" height="3" fill="#fff"/></svg>
<svg class="a" style="left:1477px;top:1012px;" width="25" height="23" viewBox="0 0 25 23"><path d="M1.500 7H5.500L11.500 1V21.500L5.500 15.500H1.500Z" fill="#fff"/><path d="M3 8.500H6L10 4.500V18L6 14H3Z" fill="#8a9aa8" opacity="0.5"/>
<path d="M14 7.500Q16 11 14 15M17 5.500Q20 11 17 17M20 3.500Q24.500 11 20 19" fill="none" stroke="#fff" stroke-width="1.400"/></svg>
<svg class="a" width="0" height="0" style="left:0;top:0"><defs><linearGradient id="fy1" x1="0" y1="0" x2="0.300" y2="1"><stop offset="0" stop-color="#f9e69a"/><stop offset="1" stop-color="#f0cc62"/></linearGradient>
<linearGradient id="fy2" x1="0" y1="0" x2="1" y2="0.300"><stop offset="0" stop-color="#f8ecb0"/><stop offset="0.500" stop-color="#f0d878"/><stop offset="1" stop-color="#ecd067"/></linearGradient>
<linearGradient id="fd1" x1="0" y1="0" x2="1" y2="1"><stop offset="0" stop-color="#eef2f8"/><stop offset="1" stop-color="#cdd6e6"/></linearGradient>
<linearGradient id="fd2" x1="0" y1="0" x2="1" y2="0"><stop offset="0" stop-color="#e6ebf4"/><stop offset="1" stop-color="#c3cde0"/></linearGradient>
<linearGradient id="fs1" x1="0" y1="0" x2="0.300" y2="1"><stop offset="0" stop-color="#f8ecac"/><stop offset="1" stop-color="#ecd576"/></linearGradient>
<linearGradient id="fs2" x1="0" y1="0" x2="1" y2="0.600"><stop offset="0" stop-color="#f7eeb6"/><stop offset="0.600" stop-color="#efdc84"/><stop offset="1" stop-color="#e9cf62"/></linearGradient>
<linearGradient id="sfs" x1="0" y1="0" x2="1" y2="0"><stop offset="0" stop-color="#000" stop-opacity="0.200"/><stop offset="1" stop-color="#000" stop-opacity="0"/></linearGradient>
<linearGradient id="shd2" x1="0" y1="0" x2="1" y2="0"><stop offset="0" stop-color="#000" stop-opacity="0.100"/><stop offset="1" stop-color="#000" stop-opacity="0"/></linearGradient>
<linearGradient id="shd" x1="0" y1="0" x2="1" y2="0"><stop offset="0" stop-color="#000" stop-opacity="0.28"/><stop offset="1" stop-color="#000" stop-opacity="0"/></linearGradient></defs></svg>
<svg class="a" style="left:2px;top:5px;" width="16" height="23" viewBox="0 0 30 46"><path d="M0.500 0.500L28 4.500V24L29.700 26.700V38.700L26 41.300L10.600 38.100V9.600Z" fill="url(#fs2)" stroke="#e2c968" stroke-width="1.1" stroke-linejoin="round"/>
<path d="M27.300 28.500L29 28V38.200L27.300 39.500Z" fill="#fbf3cf"/>
<path d="M0.500 0.500L10.600 9.600V39.900L8.600 45.300L0.500 35.900Z" fill="url(#fs1)" stroke="#e2c968" stroke-width="1.1" stroke-linejoin="round"/></svg>
<div class="a" style="left:31px;top:7px;width:1px;height:20px;background:#5a84ab;"></div>
<div class="a" style="left:32px;top:7px;width:1px;height:20px;background:rgba(255,255,255,0.300);"></div>
<svg class="a" style="left:44px;top:6px;" width="22" height="24" viewBox="0 0 22 24"><path d="M1.500 1.500H12L16.500 6V21.500H1.500Z" fill="#fdfdfd" stroke="#b9bcc2" stroke-width="1"/><path d="M12 1.500V6H16.500" fill="#e6e8ec" stroke="#b9bcc2" stroke-width="0.800"/>
<path d="M7.500 16.500L10.500 20.500L19 9.500" fill="none" stroke="#e8703a" stroke-width="3" stroke-linecap="round" stroke-linejoin="round"/></svg>
<svg class="a" style="left:75px;top:5px;" width="16" height="23" viewBox="0 0 30 46"><path d="M0.500 0.500L28 4.500V24L29.700 26.700V38.700L26 41.300L10.600 38.100V9.600Z" fill="url(#fs2)" stroke="#e2c968" stroke-width="1.1" stroke-linejoin="round"/>
<path d="M27.300 28.500L29 28V38.200L27.300 39.500Z" fill="#fbf3cf"/>
<path d="M0.500 0.500L10.600 9.600V39.900L8.600 45.300L0.500 35.900Z" fill="url(#fs1)" stroke="#e2c968" stroke-width="1.1" stroke-linejoin="round"/></svg>
<svg class="a" style="left:104px;top:14px;" width="10" height="10" viewBox="0 0 10 10"><rect x="0.500" y="1" width="8.500" height="1.200" fill="#000"/><path d="M0.300 4H9.200L4.750 9Z" fill="#000"/></svg>
<div class="a" style="left:125px;top:7px;width:1px;height:20px;background:#5a84ab;"></div>
<div class="a" style="left:126px;top:7px;width:1px;height:20px;background:rgba(255,255,255,0.300);"></div>
<svg class="a" style="left:24px;top:80px;" width="37" height="41" viewBox="0 0 37 41"><path d="M0.500 0.500H17L23.500 7V32.500H0.500Z" fill="#e9eef6" stroke="#c3cde0"/><path d="M17 0.500V7H23.500" fill="#f4f6fa" stroke="#c3cde0"/>
<path d="M4 11H19" stroke="#d3dbe8" stroke-width="1"/><path d="M4 14.5H19" stroke="#d3dbe8" stroke-width="1"/><path d="M4 18.0H19" stroke="#d3dbe8" stroke-width="1"/><path d="M4 21.5H19" stroke="#d3dbe8" stroke-width="1"/><path d="M4 25.0H19" stroke="#d3dbe8" stroke-width="1"/>
<path d="M11.500 8.500H28L35.500 16V40.500H11.500Z" fill="#eef2f8" stroke="#b7c2d8"/><path d="M28 8.500V16H35.500" fill="#f7f9fc" stroke="#b7c2d8"/>
<path d="M15 19H32" stroke="#b9c4d9" stroke-width="1.2"/><path d="M15 22.4H32" stroke="#b9c4d9" stroke-width="1.2"/><path d="M15 25.799999999999997H32" stroke="#b9c4d9" stroke-width="1.2"/><path d="M15 29.199999999999996H32" stroke="#b9c4d9" stroke-width="1.2"/><path d="M15 32.599999999999994H32" stroke="#b9c4d9" stroke-width="1.2"/><path d="M15 35.99999999999999H32" stroke="#b9c4d9" stroke-width="1.2"/></svg>
<svg class="a" style="left:90px;top:77px;" width="35" height="44" viewBox="0 0 35 44"><rect x="0.800" y="3.800" width="33" height="39" rx="2" fill="#a9b5cf" stroke="#9aa7c4"/>
<rect x="3.500" y="8" width="27.500" height="32" fill="#eef1f7"/>
<path d="M5 12H29.5" stroke="#c7d0e2" stroke-width="1.2"/><path d="M5 15.3H29.5" stroke="#c7d0e2" stroke-width="1.2"/><path d="M5 18.6H29.5" stroke="#c7d0e2" stroke-width="1.2"/><path d="M5 21.900000000000002H29.5" stroke="#c7d0e2" stroke-width="1.2"/><path d="M5 25.200000000000003H29.5" stroke="#c7d0e2" stroke-width="1.2"/><path d="M5 28.500000000000004H29.5" stroke="#c7d0e2" stroke-width="1.2"/><path d="M5 31.800000000000004H29.5" stroke="#c7d0e2" stroke-width="1.2"/><path d="M5 35.1H29.5" stroke="#c7d0e2" stroke-width="1.2"/>
<path d="M8 8.500L12 4.500H14.500Q17.500 -0.500 20.500 4.500H23L27 8.500Z" fill="#d6dcea" stroke="#97a3bf" stroke-width="0.900"/></svg>
<svg class="a" style="left:144px;top:79px;" width="16" height="24" viewBox="0 0 16 24"><path d="M3.500 0.500Q4.500 9 9.500 15M12.500 0.500Q11.500 9 6.500 15" fill="none" stroke="#a3aec6" stroke-width="2.200"/>
<ellipse cx="4" cy="19" rx="2.600" ry="3.600" fill="none" stroke="#a3aec6" stroke-width="1.800"/><ellipse cx="12" cy="19" rx="2.600" ry="3.600" fill="none" stroke="#a3aec6" stroke-width="1.800"/></svg>
<svg class="a" style="left:139px;top:115px;" width="24" height="17" viewBox="0 0 24 17"><rect x="0.500" y="0.500" width="22.500" height="15" rx="1.500" fill="#cfd8e9" stroke="#a8b4cc"/>
<path d="M3.500 4L6.500 12M7.500 4L10.500 12" stroke="#6d7890" stroke-width="1.200"/><rect x="12.500" y="10.500" width="1.800" height="1.800" fill="#6d7890"/><rect x="15.500" y="10.500" width="1.800" height="1.800" fill="#6d7890"/><rect x="18.500" y="10.500" width="1.800" height="1.800" fill="#6d7890"/></svg>
<svg class="a" style="left:141px;top:143px;" width="21" height="25" viewBox="0 0 21 25"><rect x="0.800" y="2.800" width="19" height="21" rx="1.500" fill="#b2bdd4" stroke="#9ba8c4"/><rect x="3" y="6" width="14.500" height="15.500" fill="#eef1f7"/>
<path d="M5.500 5.500L7.500 3H9Q10.500 0.500 12 3H13.500L15.500 5.500Z" fill="#d6dcea" stroke="#97a3bf" stroke-width="0.800"/>
<path d="M7 17Q7 11.500 12.500 11.500" fill="none" stroke="#7c89a6" stroke-width="2"/><path d="M9.500 9H14.500V14Z" fill="#7c89a6"/></svg>
<svg class="a" style="left:306px;top:77px;" width="30" height="46" viewBox="0 0 30 46"><path d="M26 41.500L30 38.500L41 34L31 45L22 46Z" fill="url(#shd2)"/><path d="M0.500 0.500L28 4.500V24L29.700 26.700V38.700L26 41.300L10.600 38.100V9.600Z" fill="url(#fd2)" stroke="#b3bfd4" stroke-width="0.8" stroke-linejoin="round"/>
<path d="M27.300 28.500L29 28V38.200L27.300 39.500Z" fill="#f4f6fa"/>
<path d="M0.500 0.500L10.600 9.600V39.900L8.600 45.300L0.500 35.900Z" fill="url(#fd1)" stroke="#b3bfd4" stroke-width="0.8" stroke-linejoin="round"/></svg>
<svg class="a" style="left:318px;top:97px;" width="32" height="28" viewBox="0 0 32 28"><path d="M1 14L14 1V8.500H28Q30 8.500 30 10.500V17.500Q30 19.500 28 19.500H14V27Z" fill="#b4c0d8" stroke="#a3b0cb" stroke-width="0.800"/></svg>
<svg class="a" style="left:381px;top:77px;" width="30" height="46" viewBox="0 0 30 46"><path d="M26 41.500L30 38.500L41 34L31 45L22 46Z" fill="url(#shd2)"/><path d="M0.500 0.500L28 4.500V24L29.700 26.700V38.700L26 41.300L10.600 38.100V9.600Z" fill="url(#fd2)" stroke="#b3bfd4" stroke-width="0.8" stroke-linejoin="round"/>
<path d="M27.300 28.500L29 28V38.200L27.300 39.500Z" fill="#f4f6fa"/>
<path d="M0.500 0.500L10.600 9.600V39.900L8.600 45.300L0.500 35.900Z" fill="url(#fd1)" stroke="#b3bfd4" stroke-width="0.8" stroke-linejoin="round"/></svg>
<svg class="a" style="left:397px;top:77px;" width="28" height="36" viewBox="0 0 28 36"><path d="M0.500 0.500H11L15.500 5V22.500H0.500Z" fill="#e9eef6" stroke="#c3cde0"/><path d="M3 7H13" stroke="#d3dbe8" stroke-width="1"/><path d="M3 9.6H13" stroke="#d3dbe8" stroke-width="1"/><path d="M3 12.2H13" stroke="#d3dbe8" stroke-width="1"/><path d="M3 14.799999999999999H13" stroke="#d3dbe8" stroke-width="1"/><path d="M3 17.4H13" stroke="#d3dbe8" stroke-width="1"/><path d="M3 20.0H13" stroke="#d3dbe8" stroke-width="1"/>
<path d="M8.500 8.500H21L26.500 14V34.500H8.500Z" fill="#f2f5fa" stroke="#b7c2d8"/><path d="M21 8.500V14H26.500" fill="#f7f9fc" stroke="#b7c2d8"/><path d="M11.5 17H23.5" stroke="#b9c4d9" stroke-width="1.1"/><path d="M11.5 19.6H23.5" stroke="#b9c4d9" stroke-width="1.1"/><path d="M11.5 22.200000000000003H23.5" stroke="#b9c4d9" stroke-width="1.1"/><path d="M11.5 24.800000000000004H23.5" stroke="#b9c4d9" stroke-width="1.1"/><path d="M11.5 27.400000000000006H23.5" stroke="#b9c4d9" stroke-width="1.1"/><path d="M11.5 30.000000000000007H23.5" stroke="#b9c4d9" stroke-width="1.1"/></svg>
<svg class="a" style="left:456px;top:78px;" width="48" height="44" viewBox="0 0 48 44"><defs><linearGradient id="dx" x1="0" y1="0" x2="0" y2="1"><stop offset="0" stop-color="#7f8ba8"/><stop offset="1" stop-color="#aab4ca"/></linearGradient></defs>
<path d="M4 3.500Q10 0.500 16 6Q24 14 36 36Q37.500 40 33.500 38Q22 22 11 11Q7 7 4 6.500Q2.500 5 4 3.500Z" fill="url(#dx)"/>
<path d="M46 1.500Q30 7 19 22Q12 32 9 38Q6 43 3.500 41.500Q1.500 40 2.500 36Q4 31 8 30Q12 26 17 18Q28 4 45.500 0.500Q47 0.500 46 1.500Z" fill="url(#dx)"/></svg>
<svg class="a" style="left:539px;top:79px;" width="46" height="40" viewBox="0 0 46 40"><rect x="0.800" y="10.800" width="43" height="17" fill="#eef1f7" stroke="#b4bfd6" stroke-width="1.400"/>
<rect x="4.500" y="14.500" width="24" height="10" fill="#b4bfd6"/>
<path d="M27 1.500Q32.500 1.500 35.500 4Q38.500 1.500 44 1.500M27 37.500Q32.500 37.500 35.500 35Q38.500 37.500 44 37.500M35.500 4V35" fill="none" stroke="#b9c4da" stroke-width="2.600"/></svg>
<svg class="a" style="left:628.5px;top:77px;" width="30" height="46" viewBox="0 0 30 46"><path d="M26 41.500L30 38.500L41 34L31 45L22 46Z" fill="url(#shd)"/><path d="M0.500 0.500L28 4.500V24L29.700 26.700V38.700L26 41.300L10.600 38.100V9.600Z" fill="url(#fy2)" stroke="#d4ab45" stroke-width="0.8" stroke-linejoin="round"/>
<path d="M27.300 28.500L29 28V38.200L27.300 39.500Z" fill="#fbf3cf"/>
<path d="M0.500 0.500L10.600 9.600V39.900L8.600 45.300L0.500 35.900Z" fill="url(#fy1)" stroke="#d4ab45" stroke-width="0.8" stroke-linejoin="round"/></svg>
<svg class="a" style="left:681px;top:76px;" width="24" height="25" viewBox="0 0 24 25"><rect x="0.500" y="0.500" width="17.500" height="13.500" fill="#d7e8f8" stroke="#6fa3d8"/><rect x="2.500" y="2.500" width="13.500" height="2" fill="#8bb8e6"/><rect x="3" y="6" width="5" height="6" fill="#fff" stroke="#6fa3d8" stroke-width="0.800"/>
<path d="M7.500 5.500H18.500L22.500 9.500V23.500H7.500Z" fill="#fdfdfd" stroke="#8a8f98"/>
<path d="M9 5.500V3.500M11 5.500V3.500M13 5.500V3.500M15 5.500V3.500M17 5.500V3.500" stroke="#8a8f98" stroke-width="0.900"/>
<path d="M9.5 11H20.5" stroke="#b9c6dc" stroke-width="1"/><path d="M9.5 13.2H20.5" stroke="#b9c6dc" stroke-width="1"/><path d="M9.5 15.399999999999999H20.5" stroke="#b9c6dc" stroke-width="1"/><path d="M9.5 17.599999999999998H20.5" stroke="#b9c6dc" stroke-width="1"/><path d="M9.5 19.799999999999997H20.5" stroke="#b9c6dc" stroke-width="1"/><path d="M9.5 21.999999999999996H20.5" stroke="#b9c6dc" stroke-width="1"/></svg>
<svg class="a" style="left:679px;top:107px;" width="25" height="22" viewBox="0 0 25 22"><path d="M8.500 1.500H18.500L23.500 6.500V20.500H8.500Z" fill="#fdfdfd" stroke="#8a8f98"/><path d="M18.500 1.500V6.500H23.500" fill="#eef0f3" stroke="#8a8f98" stroke-width="0.800"/>
<path d="M5 3.500H12M3 6H10M0.500 8.500H8" stroke="#2f6fc0" stroke-width="1.300"/></svg>
<svg class="a" style="left:857px;top:78px;" width="42" height="47" viewBox="0 0 42 47"><defs><linearGradient id="prd" x1="0" y1="0" x2="1" y2="1"><stop offset="0" stop-color="#ffffff"/><stop offset="1" stop-color="#eceef2"/></linearGradient>
<linearGradient id="chk" x1="0" y1="0" x2="0" y2="1"><stop offset="0" stop-color="#f4a06a"/><stop offset="1" stop-color="#e2622c"/></linearGradient></defs>
<path d="M1 1H24.500L33.500 10V42H1Z" fill="url(#prd)" stroke="#b5b9c0" stroke-width="1.100"/><path d="M24.500 1V10H33.500" fill="#f0f1f4" stroke="#b5b9c0" stroke-width="0.900"/>
<path d="M15.500 33L22.500 40.500L36 21.500" fill="none" stroke="url(#chk)" stroke-width="5.500" stroke-linecap="round" stroke-linejoin="round"/></svg>
<svg class="a" style="left:917px;top:79px;" width="23" height="25" viewBox="0 0 23 25"><rect x="0.500" y="0.500" width="16" height="18.500" fill="#e9eef6" stroke="#b7c2d8"/>
<rect x="3" y="3.500" width="3" height="3" fill="#b4c0d8"/><rect x="3" y="8.500" width="3" height="3" fill="#b4c0d8"/><rect x="3" y="13.500" width="3" height="3" fill="#b4c0d8"/>
<path d="M8 5H14M8 10H14" stroke="#c3cde0" stroke-width="1.200"/>
<path d="M15 11.500L21.500 18H18.500V23.500H11.500V18H8.500Z" fill="#b4c0d8" stroke="#9eabc6" stroke-width="0.800"/></svg>
<svg class="a" style="left:918px;top:112px;" width="23" height="22" viewBox="0 0 23 22"><path d="M0.500 0.500H12L16.500 5V20.500H0.500Z" fill="#e9eef6" stroke="#b7c2d8"/>
<path d="M17.500 3.500L20.500 6.500L9 18L4.500 19.500L6 15Z" fill="#dfe5f0" stroke="#a3b0ca" stroke-width="1"/><path d="M16 5L19 8" stroke="#a3b0ca" stroke-width="1"/></svg>
<svg class="a" style="left:917px;top:142px;" width="25" height="27" viewBox="0 0 25 27"><path d="M1 2L7 0.500L14 3V21L8 23V6Z" fill="#d4dcea" stroke="#b7c2d8" stroke-width="0.800"/><path d="M1 2V20L7 24.500L8 23V5L7 0.500Z" fill="#e9eef6" stroke="#b7c2d8" stroke-width="0.800"/>
<circle cx="16" cy="17.500" r="7" fill="#eef2f8" stroke="#a8b4cc" stroke-width="1.300"/><path d="M16 13V17.500H19.500" fill="none" stroke="#a8b4cc" stroke-width="1.300"/>
<path d="M5.500 17L10 13V15.500H13V18.500H10V21Z" fill="#b4c0d8"/></svg>
<svg class="a" style="left:1020px;top:76px;" width="24" height="24" viewBox="0 0 24 24"><rect width="24" height="24" fill="#4ba4ee"/><rect x="3.5" y="3.5" width="7" height="7" fill="#cfe6fb" stroke="#8cc4f4" stroke-width="1"/><rect x="13.5" y="3.5" width="7" height="7" fill="#cfe6fb" stroke="#8cc4f4" stroke-width="1"/><rect x="3.5" y="13.5" width="7" height="7" fill="#cfe6fb" stroke="#8cc4f4" stroke-width="1"/><rect x="13.5" y="13.5" width="7" height="7" fill="#cfe6fb" stroke="#8cc4f4" stroke-width="1"/></svg>
<svg class="a" style="left:1020px;top:106px;" width="24" height="22" viewBox="0 0 24 22"><rect x="2" y="1.5" width="7.5" height="7.5" fill="#f1f1f1" stroke="#b5b5b5" stroke-width="1"/><rect x="12.5" y="1.5" width="7.5" height="7.5" fill="#f1f1f1" stroke="#b5b5b5" stroke-width="1"/><rect x="2" y="12" width="7.5" height="7.5" fill="#f1f1f1" stroke="#b5b5b5" stroke-width="1"/><rect x="12.5" y="12" width="7.5" height="7.5" fill="#f1f1f1" stroke="#b5b5b5" stroke-width="1"/></svg>
<svg class="a" style="left:1020px;top:136px;" width="24" height="24" viewBox="0 0 24 24"><rect x="12" y="0" width="12" height="12" fill="#4ba4ee"/><rect x="0" y="12" width="12" height="12" fill="#4ba4ee"/><rect x="15" y="3" width="6" height="6" fill="#cfe6fb" stroke="#8cc4f4" stroke-width="1"/><rect x="3" y="15" width="6" height="6" fill="#cfe6fb" stroke="#8cc4f4" stroke-width="1"/><rect x="2.5" y="2.5" width="7" height="7" fill="#f1f1f1" stroke="#b5b5b5" stroke-width="1"/><rect x="14.5" y="14.5" width="7" height="7" fill="#f1f1f1" stroke="#b5b5b5" stroke-width="1"/></svg>
<svg class="a" style="left:9px;top:208px;" width="36" height="36" viewBox="0 0 36 36"><circle cx="18" cy="18" r="15.600" fill="#fff" stroke="#6f6f6f" stroke-width="2"/>
<path d="M26.500 18H10.500M17 10.500L9.500 18L17 25.500" fill="none" stroke="#6f6f6f" stroke-width="3.200"/></svg>
<svg class="a" style="left:54px;top:208px;" width="36" height="36" viewBox="0 0 36 36"><circle cx="18.300" cy="18" r="15.600" fill="#fff" stroke="#d4d4d4" stroke-width="2"/>
<path d="M9.500 18H25.500M19 10.500L26.500 18L19 25.500" fill="none" stroke="#d0d0d0" stroke-width="3.200"/></svg>
<svg class="a" style="left:101px;top:225px;" width="9" height="5" viewBox="0 0 9 5"><path d="M0 0H9L4.500 5Z" fill="#7a7a7a"/></svg>
<svg class="a" style="left:127px;top:216px;" width="16" height="22" viewBox="0 0 16 22"><path d="M7.500 21V3M1.500 9.500L7.500 2.500L13.500 9.500" fill="none" stroke="#7a7a7a" stroke-width="3"/></svg>
<svg class="a" style="left:156px;top:215.5px;" width="16.5" height="22.5" viewBox="0 0 30 46"><path d="M0.500 0.500L28 4.500V24L29.700 26.700V38.700L26 41.300L10.600 38.100V9.600Z" fill="url(#fs2)" stroke="#e2c968" stroke-width="1.1" stroke-linejoin="round"/>
<path d="M27.300 28.500L29 28V38.200L27.300 39.500Z" fill="#fbf3cf"/>
<path d="M0.500 0.500L10.600 9.600V39.900L8.600 45.300L0.500 35.900Z" fill="url(#fs1)" stroke="#e2c968" stroke-width="1.1" stroke-linejoin="round"/></svg>
<svg class="a" style="left:169px;top:227px;" width="10" height="11" viewBox="0 0 10 11"><path d="M0 10.500L3.500 7L9.500 3.500L6 9Z" fill="url(#shd)" opacity="0.600"/></svg>
<svg class="a" style="left:1474px;top:222px;" width="14" height="11" viewBox="0 0 14 11"><path d="M1.800 2L7 7.800L12.200 2" fill="none" stroke="#6a6a6a" stroke-width="2.800"/></svg>
<svg class="a" style="left:1502px;top:217px;" width="18" height="20" viewBox="0 0 18 20"><path d="M12.500 4.300A7 7 0 1 0 15.300 10.500" fill="none" stroke="#6e6e6e" stroke-width="2.200"/><path d="M8.800 0.300L15.200 4.600L8.800 8Z" fill="#6e6e6e"/></svg>
<svg class="a" style="left:1637px;top:217px;" width="20" height="20" viewBox="0 0 20 20"><circle cx="12" cy="7.300" r="4.800" fill="none" stroke="#6e6e6e" stroke-width="2.200"/><path d="M8.600 10.800L2.800 16.600" stroke="#6e6e6e" stroke-width="2.800" stroke-linecap="round"/></svg>
<div class="a" style="left:0;top:250px;width:209px;height:709px;overflow:hidden">
<svg class="a" style="left:30px;top:17px;" width="23" height="23" viewBox="0 0 23 23"><defs><linearGradient id="stg" x1="0" y1="0" x2="0" y2="1"><stop offset="0" stop-color="#fff3a0"/><stop offset="0.500" stop-color="#ffd43a"/><stop offset="1" stop-color="#f5a623"/></linearGradient></defs>
<path d="M11.500 1L14.700 8.200L22.300 9L16.600 14.200L18.300 21.800L11.500 17.800L4.700 21.800L6.400 14.200L0.700 9L8.300 8.200Z" fill="url(#stg)" stroke="#f0a020" stroke-width="1.300" stroke-linejoin="round"/></svg>
<svg class="a" style="left:39px;top:49px;" width="25" height="25" viewBox="0 0 25 25"><circle cx="8" cy="8" r="6.500" fill="#e9eef3" stroke="#a9b4bf" stroke-width="1.200"/><path d="M8 4V8.500H11" fill="none" stroke="#8f9aa5" stroke-width="1.100"/>
<rect x="9" y="5" width="12" height="11" fill="#f4f7fa" stroke="#a9b4bf" stroke-width="0.900"/><rect x="11" y="8" width="8" height="6" fill="#5ea0dc"/><path d="M11 14L14 10.500L16 12.500L19 9.500V14Z" fill="#7cc46a"/>
<path d="M2 17.500L7 13.500H19L23.500 17.500L18 22.500H6Z" fill="#d5dbe1" stroke="#9da6af" stroke-width="0.900"/><path d="M6 17H19L16.500 19.500H8Z" fill="#4a9a8a"/></svg>
<svg class="a" style="left:40px;top:87px;" width="23" height="18" viewBox="0 0 23 18"><defs><linearGradient id="dk" x1="0" y1="0" x2="1" y2="1"><stop offset="0" stop-color="#5b97f0"/><stop offset="0.550" stop-color="#2f6fe0"/><stop offset="1" stop-color="#1d4fc0"/></linearGradient></defs>
<rect x="0.500" y="0.500" width="22" height="17" fill="url(#dk)" stroke="#8b95a8" stroke-width="1"/><path d="M1 1H15L7 13.500H1Z" fill="#fff" opacity="0.160"/><rect x="1.500" y="13.500" width="20" height="1.200" fill="#a9c6f5"/><rect x="1" y="15" width="21" height="2" fill="#2a4e9c"/></svg>
<svg class="a" style="left:42px;top:113px;" width="14" height="22" viewBox="0 0 30 46"><path d="M0.500 0.500L28 4.500V24L29.700 26.700V38.700L26 41.300L10.600 38.100V9.600Z" fill="url(#fs2)" stroke="#e2c968" stroke-width="1.1" stroke-linejoin="round"/>
<path d="M27.300 28.500L29 28V38.200L27.300 39.500Z" fill="#fbf3cf"/>
<path d="M0.500 0.500L10.600 9.600V39.900L8.600 45.300L0.500 35.900Z" fill="url(#fs1)" stroke="#e2c968" stroke-width="1.1" stroke-linejoin="round"/></svg>
<svg class="a" style="left:50px;top:121px;" width="12" height="15" viewBox="0 0 12 15"><defs><linearGradient id="dar" x1="0" y1="0" x2="0" y2="1"><stop offset="0" stop-color="#5cc0f5"/><stop offset="1" stop-color="#1a80d8"/></linearGradient></defs><path d="M3.500 0.500H8.500V7H11.500L6 14L0.500 7H3.500Z" fill="url(#dar)" stroke="#1e78c8" stroke-width="0.600"/></svg>
<svg class="a" style="left:41px;top:147px;" width="20" height="20" viewBox="0 0 20 20"><circle cx="10" cy="10" r="10" fill="#d9141f"/><path d="M5.300 13.800V6.500L10 11L14.700 6.500V13.800" fill="none" stroke="#fff" stroke-width="2.300" stroke-linejoin="miter"/></svg>
<svg class="a" style="left:41px;top:179px;" width="20" height="20" viewBox="0 0 20 20"><circle cx="10" cy="10" r="10" fill="#d9141f"/><path d="M5.300 13.800V6.500L10 11L14.700 6.500V13.800" fill="none" stroke="#fff" stroke-width="2.300" stroke-linejoin="miter"/></svg>
<svg class="a" style="left:41px;top:211px;" width="20" height="20" viewBox="0 0 20 20"><circle cx="10" cy="10" r="10" fill="#d9141f"/><path d="M5.300 13.800V6.500L10 11L14.700 6.500V13.800" fill="none" stroke="#fff" stroke-width="2.300" stroke-linejoin="miter"/></svg>
<svg class="a" style="left:41px;top:243px;" width="20" height="20" viewBox="0 0 20 20"><circle cx="10" cy="10" r="10" fill="#d9141f"/><path d="M5.300 13.800V6.500L10 11L14.700 6.500V13.800" fill="none" stroke="#fff" stroke-width="2.300" stroke-linejoin="miter"/></svg>
<svg class="a" style="left:30px;top:311px;" width="23" height="18" viewBox="0 0 23 18"><defs><linearGradient id="dk2" x1="0" y1="0" x2="1" y2="1"><stop offset="0" stop-color="#5b97f0"/><stop offset="0.550" stop-color="#2f6fe0"/><stop offset="1" stop-color="#1d4fc0"/></linearGradient></defs>
<rect x="0.500" y="0.500" width="22" height="17" fill="url(#dk2)" stroke="#8b95a8" stroke-width="1"/><path d="M1 1H15L7 13.500H1Z" fill="#fff" opacity="0.160"/><rect x="1.500" y="13.500" width="20" height="1.200" fill="#a9c6f5"/><rect x="1" y="15" width="21" height="2" fill="#2a4e9c"/></svg>
<svg class="a" style="left:39px;top:340px;" width="24" height="16" viewBox="0 0 24 16"><path d="M5 15.500Q0.500 15.500 0.500 11.500Q0.500 8 4 7.500Q4 3.500 8 3Q9.500 3 10.500 4Q12 0.500 15.500 0.500Q20 0.500 20.500 5.500Q23.500 6 23.500 10.500Q23.500 15.500 19 15.500Z" fill="#1b57b5"/>
<path d="M6 15.500Q4.500 12 7.500 10.500Q8 7 11.500 7Q13.500 7 14.500 8.500Q17 7 19 9.500Q23 9.500 23.500 13Q23.500 15.500 20 15.500Z" fill="#1b57b5" stroke="#fff" stroke-width="1.100"/></svg>
<svg class="a" style="left:50px;top:369.5px;" width="15.5" height="22.5" viewBox="0 0 30 46"><path d="M0.500 0.500L28 4.500V24L29.700 26.700V38.700L26 41.300L10.600 38.100V9.600Z" fill="url(#fs2)" stroke="#e2c968" stroke-width="1.1" stroke-linejoin="round"/>
<path d="M27.300 28.500L29 28V38.200L27.300 39.500Z" fill="#fbf3cf"/>
<path d="M0.500 0.500L10.600 9.600V39.900L8.600 45.300L0.500 35.900Z" fill="url(#fs1)" stroke="#e2c968" stroke-width="1.1" stroke-linejoin="round"/></svg>
<svg class="a" style="left:62px;top:381.5px;" width="10" height="11" viewBox="0 0 10 11"><path d="M0 10.500L3.500 7L9.500 3.500L6 9Z" fill="url(#sfs)"/></svg>
<svg class="a" style="left:50px;top:401.5px;" width="15.5" height="22.5" viewBox="0 0 30 46"><path d="M0.500 0.500L28 4.500V24L29.700 26.700V38.700L26 41.300L10.600 38.100V9.600Z" fill="url(#fs2)" stroke="#e2c968" stroke-width="1.1" stroke-linejoin="round"/>
<path d="M27.300 28.500L29 28V38.200L27.300 39.500Z" fill="#fbf3cf"/>
<path d="M0.500 0.500L10.600 9.600V39.900L8.600 45.300L0.500 35.900Z" fill="url(#fs1)" stroke="#e2c968" stroke-width="1.1" stroke-linejoin="round"/></svg>
<svg class="a" style="left:62px;top:413.5px;" width="10" height="11" viewBox="0 0 10 11"><path d="M0 10.500L3.500 7L9.500 3.500L6 9Z" fill="url(#sfs)"/></svg>
<svg class="a" style="left:50px;top:433.5px;" width="15.5" height="22.5" viewBox="0 0 30 46"><path d="M0.500 0.500L28 4.500V24L29.700 26.700V38.700L26 41.300L10.600 38.100V9.600Z" fill="url(#fs2)" stroke="#e2c968" stroke-width="1.1" stroke-linejoin="round"/>
<path d="M27.300 28.500L29 28V38.200L27.300 39.500Z" fill="#fbf3cf"/>
<path d="M0.500 0.500L10.600 9.600V39.900L8.600 45.300L0.500 35.900Z" fill="url(#fs1)" stroke="#e2c968" stroke-width="1.1" stroke-linejoin="round"/></svg>
<svg class="a" style="left:62px;top:445.5px;" width="10" height="11" viewBox="0 0 10 11"><path d="M0 10.500L3.500 7L9.500 3.500L6 9Z" fill="url(#sfs)"/></svg>
<svg class="a" style="left:39px;top:467px;" width="25" height="22" viewBox="0 0 25 22"><defs><radialGradient id="hb" cx="0.350" cy="0.300" r="0.800"><stop offset="0" stop-color="#b8d0ff"/><stop offset="0.500" stop-color="#3d6fe0"/><stop offset="1" stop-color="#1a3fa8"/></radialGradient>
<radialGradient id="hgn" cx="0.350" cy="0.300" r="0.800"><stop offset="0" stop-color="#c8f0b0"/><stop offset="0.500" stop-color="#3fae3a"/><stop offset="1" stop-color="#1a7a28"/></radialGradient></defs>
<path d="M5 9.500L13 10L17 17L13 10L15 4" fill="none" stroke="#6b8bd0" stroke-width="1.600"/>
<circle cx="14.800" cy="4" r="3.600" fill="url(#hb)"/><circle cx="4.500" cy="9.500" r="4.200" fill="url(#hb)"/><circle cx="12.800" cy="10.500" r="5.500" fill="url(#hgn)"/><circle cx="18" cy="16.500" r="4.800" fill="url(#hb)"/></svg>
<svg class="a" style="left:41.5px;top:497px;" width="14" height="23" viewBox="0 0 30 46"><path d="M0.500 0.500L28 4.500V24L29.700 26.700V38.700L26 41.300L10.600 38.100V9.600Z" fill="url(#fs2)" stroke="#e2c968" stroke-width="1.1" stroke-linejoin="round"/>
<path d="M27.300 28.500L29 28V38.200L27.300 39.500Z" fill="#fbf3cf"/>
<path d="M0.500 0.500L10.600 9.600V39.900L8.600 45.300L0.500 35.900Z" fill="url(#fs1)" stroke="#e2c968" stroke-width="1.1" stroke-linejoin="round"/></svg>
<svg class="a" style="left:49px;top:503px;" width="13" height="17" viewBox="0 0 13 17"><circle cx="6.500" cy="4.500" r="3.600" fill="#6b4a32"/><circle cx="6.500" cy="5.500" r="2.700" fill="#e9b890"/><path d="M0.500 16.500Q0.500 9.500 6.500 9.500Q12.500 9.500 12.500 16.500Z" fill="#3f9a6a"/><path d="M5 9.800L6.500 13L8 9.800Z" fill="#e8f4ec"/></svg>
<svg class="a" style="left:40px;top:532px;" width="22" height="19" viewBox="0 0 22 19"><defs><linearGradient id="pcs" x1="0" y1="0" x2="1" y2="1"><stop offset="0" stop-color="#1030b0"/><stop offset="0.500" stop-color="#2a5be0"/><stop offset="1" stop-color="#7fb0f5"/></linearGradient></defs>
<path d="M1 4L4 3V13L1 12Z" fill="#aab2bc"/><path d="M4.500 1.500L20.500 0.500V12.500L4.500 13.500Z" fill="url(#pcs)" stroke="#9aa4b0" stroke-width="0.900"/><path d="M9 1L14 13" stroke="#dce8fb" stroke-width="2.500" opacity="0.850"/>
<path d="M9 14H15L16 16H8Z" fill="#b8c0c8"/><ellipse cx="12.500" cy="17" rx="6.500" ry="1.600" fill="#d0d5db" stroke="#a8b0b8" stroke-width="0.500"/></svg>
<svg class="a" style="left:39px;top:562px;" width="25" height="24" viewBox="0 0 25 24"><path d="M1 4Q1 2 3 2H8L10 4H14V9H1Z" fill="#f4d67a" stroke="#d9b24c" stroke-width="0.700"/><rect x="3" y="3.200" width="2" height="2" fill="#3a9a3a"/>
<path d="M8 6Q8 4.500 9.500 4.500H13L14.500 6H19V10H8Z" fill="#f4d67a" stroke="#d9b24c" stroke-width="0.700"/><rect x="9.500" y="5.200" width="2" height="2" fill="#d04030"/>
<path d="M14 7.500Q14 6 15.500 6H19L20.500 7.500H24V11H14Z" fill="#f4d67a" stroke="#d9b24c" stroke-width="0.700"/><rect x="16" y="6.800" width="2" height="2" fill="#3a9a3a"/>
<rect x="1" y="8.500" width="23" height="12.500" rx="1" fill="#fbeeb0" stroke="#dcb958" stroke-width="0.800"/>
<path d="M3.500 23.500V15.500Q3.500 14.500 4.500 14.500H20.500Q21.500 14.500 21.500 15.500V23.500H16.500V19H8.500V23.500Z" fill="#a9dcf5" stroke="#5aaee0" stroke-width="0.800"/></svg>
<svg class="a" style="left:49px;top:593px;" width="24" height="25" viewBox="0 0 24 25"><path d="M0.500 17.5L12 12.5L23.500 17.5L12 22.5Z" fill="#cfe8f8" stroke="#5fb0e6" stroke-width="0.800"/><path d="M0.500 17.5L12 22.5L23.500 17.5V19.0L12 24.0L0.500 19.0Z" fill="#3d9ade"/><path d="M6.500 0.500H14L18 4.500V18.500H6.500Z" fill="#fbfcfd" stroke="#a9b4c0" stroke-width="0.800"/><path d="M8.500 5H12M8.500 7.500H16M8.500 12.500H16M8.500 15H16" stroke="#b9c4d0" stroke-width="0.900"/><rect x="11.500" y="7.500" width="4.500" height="3.500" fill="#4a80c0"/></svg>
<svg class="a" style="left:49px;top:625px;" width="24" height="25" viewBox="0 0 24 25"><path d="M0.500 17.5L12 12.5L23.500 17.5L12 22.5Z" fill="#cfe8f8" stroke="#5fb0e6" stroke-width="0.800"/><path d="M0.500 17.5L12 22.5L23.500 17.5V19.0L12 24.0L0.500 19.0Z" fill="#3d9ade"/><ellipse cx="11" cy="15" rx="4.500" ry="3.600" fill="#2e8de0"/><path d="M14.500 15V1.500Q19.500 4 18.500 10" fill="none" stroke="#2e8de0" stroke-width="2"/></svg>
<svg class="a" style="left:49px;top:657px;" width="24" height="25" viewBox="0 0 24 25"><path d="M0.500 17.5L12 12.5L23.500 17.5L12 22.5Z" fill="#cfe8f8" stroke="#5fb0e6" stroke-width="0.800"/><path d="M0.500 17.5L12 22.5L23.500 17.5V19.0L12 24.0L0.500 19.0Z" fill="#3d9ade"/><rect x="5.500" y="3.500" width="13" height="12" fill="#fbfcfd" stroke="#a9b4c0" stroke-width="0.800"/><rect x="7.500" y="5.500" width="9" height="7.500" fill="#9fc8e8"/><path d="M7.500 13L11 8.500L13.500 11L16.500 9V13Z" fill="#4f8a4a"/></svg>
<svg class="a" style="left:49px;top:689px;" width="24" height="25" viewBox="0 0 24 25"><path d="M0.500 17.5L12 12.5L23.500 17.5L12 22.5Z" fill="#cfe8f8" stroke="#5fb0e6" stroke-width="0.800"/><path d="M0.500 17.5L12 22.5L23.500 17.5V19.0L12 24.0L0.500 19.0Z" fill="#3d9ade"/><rect x="5.500" y="2.500" width="13" height="17" fill="#2a2a30"/><rect x="8" y="3.500" width="8" height="7" fill="#3a6ab8"/><rect x="8" y="11.500" width="8" height="7" fill="#c8642a"/>
<path d="M6.700 4V18M17.300 4V18" stroke="#e8e8e8" stroke-width="1" stroke-dasharray="1.500 1.500"/></svg>
</div>
<svg class="a" style="left:270px;top:311px;" width="19" height="22" viewBox="0 0 19 22"><path d="M2 20.200H17.300" stroke="#8e9196" stroke-width="1.500" opacity="0.600"/>
<path d="M1.500 0.800H12.500L17 5.300V19.500H1.500Z" fill="#fbfcfd"/>
<path d="M1.500 0.800V19.500" stroke="#dfe1e4" stroke-width="0.800"/><path d="M1.500 0.800H12.500" stroke="#cfd2d6" stroke-width="0.800"/><path d="M17 5.300V19.500" stroke="#b4b7bc" stroke-width="0.900"/>
<path d="M12.500 0.800V5.300H17Z" fill="#dfe2e6" stroke="#b9bcc1" stroke-width="0.700"/>
<path d="M3.300 1.800L4.300 3.300M6.100 1.800L7.100 3.300M8.900 1.800L9.900 3.300" stroke="#a9acb0" stroke-width="0.900"/>
<path d="M2.2 7.3H16.5" stroke="#d2dbe6" stroke-width="1.5"/><path d="M2.2 10.15H16.5" stroke="#d2dbe6" stroke-width="1.5"/><path d="M2.2 13.0H16.5" stroke="#d2dbe6" stroke-width="1.5"/><path d="M2.2 15.85H16.5" stroke="#d2dbe6" stroke-width="1.5"/></svg>
<svg class="a" style="left:270px;top:342px;" width="19" height="22" viewBox="0 0 19 22"><path d="M2 20.200H17.300" stroke="#8e9196" stroke-width="1.500" opacity="0.600"/>
<path d="M1.500 0.800H12.500L17 5.300V19.500H1.500Z" fill="#fbfcfd"/>
<path d="M1.500 0.800V19.500" stroke="#dfe1e4" stroke-width="0.800"/><path d="M1.500 0.800H12.500" stroke="#cfd2d6" stroke-width="0.800"/><path d="M17 5.300V19.500" stroke="#b4b7bc" stroke-width="0.900"/>
<path d="M12.500 0.800V5.300H17Z" fill="#dfe2e6" stroke="#b9bcc1" stroke-width="0.700"/>
<path d="M3.300 1.800L4.300 3.300M6.100 1.800L7.100 3.300M8.900 1.800L9.900 3.300" stroke="#a9acb0" stroke-width="0.900"/>
<path d="M2.2 7.3H16.5" stroke="#d2dbe6" stroke-width="1.5"/><path d="M2.2 10.15H16.5" stroke="#d2dbe6" stroke-width="1.5"/><path d="M2.2 13.0H16.5" stroke="#d2dbe6" stroke-width="1.5"/><path d="M2.2 15.85H16.5" stroke="#d2dbe6" stroke-width="1.5"/></svg>
<svg class="a" style="left:270px;top:373px;" width="19" height="22" viewBox="0 0 19 22"><path d="M2 20.200H17.300" stroke="#8e9196" stroke-width="1.500" opacity="0.600"/>
<path d="M1.500 0.800H12.500L17 5.300V19.500H1.500Z" fill="#fbfcfd"/>
<path d="M1.500 0.800V19.500" stroke="#dfe1e4" stroke-width="0.800"/><path d="M1.500 0.800H12.500" stroke="#cfd2d6" stroke-width="0.800"/><path d="M17 5.300V19.500" stroke="#b4b7bc" stroke-width="0.900"/>
<path d="M12.500 0.800V5.300H17Z" fill="#dfe2e6" stroke="#b9bcc1" stroke-width="0.700"/>
<path d="M3.300 1.800L4.300 3.300M6.100 1.800L7.100 3.300M8.900 1.800L9.900 3.300" stroke="#a9acb0" stroke-width="0.900"/>
<path d="M2.2 7.3H16.5" stroke="#d2dbe6" stroke-width="1.5"/><path d="M2.2 10.15H16.5" stroke="#d2dbe6" stroke-width="1.5"/><path d="M2.2 13.0H16.5" stroke="#d2dbe6" stroke-width="1.5"/><path d="M2.2 15.85H16.5" stroke="#d2dbe6" stroke-width="1.5"/></svg>
<svg class="a" style="left:270px;top:404px;" width="19" height="22" viewBox="0 0 19 22"><path d="M2 20.200H17.300" stroke="#8e9196" stroke-width="1.500" opacity="0.600"/>
<path d="M1.500 0.800H12.500L17 5.300V19.500H1.500Z" fill="#fbfcfd"/>
<path d="M1.500 0.800V19.500" stroke="#dfe1e4" stroke-width="0.800"/><path d="M1.500 0.800H12.500" stroke="#cfd2d6" stroke-width="0.800"/><path d="M17 5.300V19.500" stroke="#b4b7bc" stroke-width="0.900"/>
<path d="M12.500 0.800V5.300H17Z" fill="#dfe2e6" stroke="#b9bcc1" stroke-width="0.700"/>
<path d="M3.300 1.800L4.300 3.300M6.100 1.800L7.100 3.300M8.900 1.800L9.900 3.300" stroke="#a9acb0" stroke-width="0.900"/>
<path d="M2.2 7.3H16.5" stroke="#d2dbe6" stroke-width="1.5"/><path d="M2.2 10.15H16.5" stroke="#d2dbe6" stroke-width="1.5"/><path d="M2.2 13.0H16.5" stroke="#d2dbe6" stroke-width="1.5"/><path d="M2.2 15.85H16.5" stroke="#d2dbe6" stroke-width="1.5"/></svg>
<svg class="a" style="left:270px;top:435px;" width="19" height="22" viewBox="0 0 19 22"><path d="M2 20.200H17.300" stroke="#8e9196" stroke-width="1.500" opacity="0.600"/>
<path d="M1.500 0.800H12.500L17 5.300V19.500H1.500Z" fill="#fbfcfd"/>
<path d="M1.500 0.800V19.500" stroke="#dfe1e4" stroke-width="0.800"/><path d="M1.500 0.800H12.500" stroke="#cfd2d6" stroke-width="0.800"/><path d="M17 5.300V19.500" stroke="#b4b7bc" stroke-width="0.900"/>
<path d="M12.500 0.800V5.300H17Z" fill="#dfe2e6" stroke="#b9bcc1" stroke-width="0.700"/>
<path d="M3.300 1.800L4.300 3.300M6.100 1.800L7.100 3.300M8.900 1.800L9.900 3.300" stroke="#a9acb0" stroke-width="0.900"/>
<path d="M2.2 7.3H16.5" stroke="#d2dbe6" stroke-width="1.5"/><path d="M2.2 10.15H16.5" stroke="#d2dbe6" stroke-width="1.5"/><path d="M2.2 13.0H16.5" stroke="#d2dbe6" stroke-width="1.5"/><path d="M2.2 15.85H16.5" stroke="#d2dbe6" stroke-width="1.5"/></svg>
<svg class="a" style="left:270px;top:466px;" width="19" height="22" viewBox="0 0 19 22"><path d="M2 20.200H17.300" stroke="#8e9196" stroke-width="1.500" opacity="0.600"/>
<path d="M1.500 0.800H12.500L17 5.300V19.500H1.500Z" fill="#fbfcfd"/>
<path d="M1.500 0.800V19.500" stroke="#dfe1e4" stroke-width="0.800"/><path d="M1.500 0.800H12.500" stroke="#cfd2d6" stroke-width="0.800"/><path d="M17 5.300V19.500" stroke="#b4b7bc" stroke-width="0.900"/>
<path d="M12.500 0.800V5.300H17Z" fill="#dfe2e6" stroke="#b9bcc1" stroke-width="0.700"/>
<path d="M3.300 1.800L4.300 3.300M6.100 1.800L7.100 3.300M8.900 1.800L9.900 3.300" stroke="#a9acb0" stroke-width="0.900"/>
<path d="M2.2 7.3H16.5" stroke="#d2dbe6" stroke-width="1.5"/><path d="M2.2 10.15H16.5" stroke="#d2dbe6" stroke-width="1.5"/><path d="M2.2 13.0H16.5" stroke="#d2dbe6" stroke-width="1.5"/><path d="M2.2 15.85H16.5" stroke="#d2dbe6" stroke-width="1.5"/></svg>
<svg class="a" style="left:270px;top:497px;" width="19" height="22" viewBox="0 0 19 22"><path d="M2 20.200H17.300" stroke="#8e9196" stroke-width="1.500" opacity="0.600"/>
<path d="M1.500 0.800H12.500L17 5.300V19.500H1.500Z" fill="#fbfcfd"/>
<path d="M1.500 0.800V19.500" stroke="#dfe1e4" stroke-width="0.800"/><path d="M1.500 0.800H12.500" stroke="#cfd2d6" stroke-width="0.800"/><path d="M17 5.300V19.500" stroke="#b4b7bc" stroke-width="0.900"/>
<path d="M12.500 0.800V5.300H17Z" fill="#dfe2e6" stroke="#b9bcc1" stroke-width="0.700"/>
<path d="M3.300 1.800L4.300 3.300M6.100 1.800L7.100 3.300M8.900 1.800L9.900 3.300" stroke="#a9acb0" stroke-width="0.900"/>
<path d="M2.2 7.3H16.5" stroke="#d2dbe6" stroke-width="1.5"/><path d="M2.2 10.15H16.5" stroke="#d2dbe6" stroke-width="1.5"/><path d="M2.2 13.0H16.5" stroke="#d2dbe6" stroke-width="1.5"/><path d="M2.2 15.85H16.5" stroke="#d2dbe6" stroke-width="1.5"/></svg>
<svg class="a" style="left:1611px;top:967px;" width="24" height="21" viewBox="0 0 24 21"><g stroke="#4a4a4a" stroke-width="1"><path d="M8.500 2H12.500M14.500 2H23M8.500 6H12.500M14.500 6H23M8.500 10H12.500M14.500 10H23M8.500 14H12.500M14.500 14H23M8.500 18H12.500M14.500 18H23"/></g>
<rect x="1" y="0.700" width="5.500" height="2.800" fill="#fff" stroke="#c07070" stroke-width="0.700"/><rect x="1" y="4.700" width="5.500" height="2.800" fill="#fff" stroke="#c08080" stroke-width="0.700"/><rect x="1" y="8.700" width="5.500" height="2.800" fill="#fff" stroke="#c0a070" stroke-width="0.700"/><rect x="1" y="12.700" width="5.500" height="2.800" fill="#fff" stroke="#a0b070" stroke-width="0.700"/><rect x="1" y="16.700" width="5.500" height="2.800" fill="#fff" stroke="#c0b070" stroke-width="0.700"/></svg>
<svg class="a" style="left:1645px;top:967px;" width="21" height="18" viewBox="0 0 21 18"><defs><linearGradient id="pv" x1="0" y1="0" x2="1" y2="1"><stop offset="0" stop-color="#2a74c4"/><stop offset="0.500" stop-color="#3f9ac0"/><stop offset="1" stop-color="#bfe6dc"/></linearGradient></defs>
<rect x="0.500" y="0.500" width="19.500" height="16" fill="#fdfdfd" stroke="#a8a8a8"/><rect x="2.500" y="2.500" width="15.500" height="12" fill="url(#pv)"/></svg>
<div class="a" style="left:275px;top:389px;width:250px;height:79px;background:#fff;border:1px solid #767676;box-sizing:border-box;box-shadow:3px 3px 4px rgba(0,0,0,0.35);"></div>
<div class="t" style="left:281.5px;top:395px;font-size:18px;line-height:20px;color:#575757;letter-spacing:0.059px;">Typ: Textový dokument</div>
<div class="t" style="left:281.5px;top:420px;font-size:18px;line-height:20px;color:#575757;letter-spacing:-0.240px;">Velikost: 94,8 MB</div>
<div class="t" style="left:281.5px;top:445px;font-size:18px;line-height:20px;color:#575757;letter-spacing:-0.184px;">Datum změny: 1. 7. 2015 7:15</div>
</body></html>
